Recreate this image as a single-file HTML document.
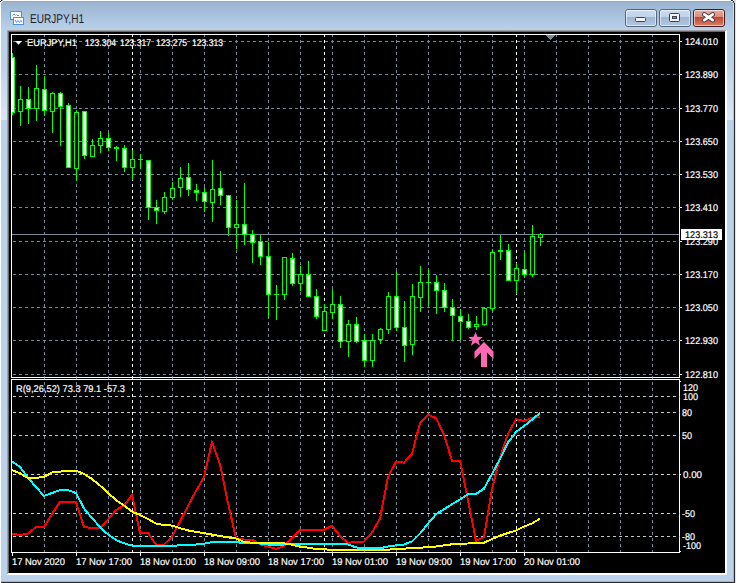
<!DOCTYPE html><html><head><meta charset="utf-8"><style>
html,body{margin:0;padding:0;background:#fff;width:737px;height:583px;overflow:hidden}
svg{display:block}
text{font-family:"Liberation Sans",sans-serif}
</style></head><body>
<svg width="737" height="583" viewBox="0 0 737 583">
<defs><linearGradient id="tg" x1="0" y1="0" x2="0" y2="1"><stop offset="0" stop-color="#99b3cf"/><stop offset="1" stop-color="#bbd2eb"/></linearGradient><linearGradient id="bt" x1="0" y1="0" x2="0" y2="1"><stop offset="0" stop-color="#cbdcef"/><stop offset="0.42" stop-color="#bfd3ea"/><stop offset="0.43" stop-color="#9db5d0"/><stop offset="1" stop-color="#b3c9e2"/></linearGradient><linearGradient id="ct" x1="0" y1="0" x2="0" y2="1"><stop offset="0" stop-color="#eab0a2"/><stop offset="0.42" stop-color="#dc8c79"/><stop offset="0.43" stop-color="#c2432a"/><stop offset="1" stop-color="#d8826b"/></linearGradient><linearGradient id="glow" x1="0" y1="0" x2="0" y2="1"><stop offset="0" stop-color="#bcd2ea"/><stop offset="1" stop-color="#dbe7f4"/></linearGradient></defs>
<g shape-rendering="crispEdges">
<rect x="1" y="1" width="734" height="582" fill="#bcd2ea"/>
<rect x="1" y="1" width="734" height="30" fill="url(#tg)"/>
<rect x="2" y="1" width="732" height="1" fill="#8eabca"/>
<rect x="1" y="64" width="6" height="56" fill="url(#glow)"/>
<rect x="727" y="64" width="6" height="56" fill="url(#glow)"/>
<linearGradient id="cy" x1="0" y1="0" x2="0" y2="1"><stop offset="0" stop-color="#b4f0ff"/><stop offset="0.15" stop-color="#6edcff"/><stop offset="1" stop-color="#4fd3ff"/></linearGradient>
<rect x="733" y="3" width="1" height="579" fill="url(#cy)"/>
<rect x="1" y="581" width="733" height="1" fill="#4fd3ff"/>
<rect x="734" y="3" width="1" height="580" fill="#2b2b2b"/>
<rect x="1" y="582" width="734" height="1" fill="#2b2b2b"/>
<rect x="735" y="0" width="2" height="583" fill="#ffffff"/>
<rect x="0" y="0" width="1" height="583" fill="#ffffff"/>
<rect x="1" y="0" width="1" height="1" fill="#1a1a1a"/><rect x="0" y="1" width="1" height="1" fill="#1a1a1a"/><rect x="1" y="1" width="2" height="1" fill="#e2e6ea"/><rect x="1" y="2" width="1" height="1" fill="#e2e6ea"/><rect x="2" y="0" width="1" height="1" fill="#909090"/>
<rect x="731" y="0" width="2" height="1" fill="#0a2a2a"/><rect x="733" y="1" width="1" height="1" fill="#103030"/><rect x="733" y="2" width="1" height="1" fill="#206060"/><rect x="731" y="1" width="2" height="1" fill="#c8f6ff"/><rect x="734" y="0" width="1" height="3" fill="#c8c8c8"/><rect x="735" y="0" width="1" height="583" fill="#e4e4e4"/>
</g>
<g shape-rendering="crispEdges"><rect x="10.5" y="11.5" width="11" height="8" fill="#fffef5" stroke="#5592f2" stroke-width="1"/><rect x="10.5" y="11.5" width="11" height="8" fill="none" stroke="#3f8a6a" stroke-width="1" stroke-dasharray="1 2" stroke-dashoffset="1" opacity="0.6"/><rect x="13.5" y="17.5" width="10" height="7" fill="#ffffff" stroke="#5592f2" stroke-width="1"/><rect x="13.5" y="17.5" width="10" height="7" fill="none" stroke="#3f8a6a" stroke-width="1" stroke-dasharray="1 2" stroke-dashoffset="1" opacity="0.6"/></g><path d="M12.5,15.5 L14,14 L15.5,15.5 M16.5,14.5 L18,16 L19,15" fill="none" stroke="#4f8bf0" stroke-width="1"/><polyline points="15,20 16.5,22.5 18,20.5 19.5,22.5 21,20.5 22,22" fill="none" stroke="#4f8bf0" stroke-width="1"/>
<text x="30" y="23" font-size="12.6" fill="#1e1e30" text-rendering="geometricPrecision" textLength="54" lengthAdjust="spacingAndGlyphs">EURJPY,H1</text>
<rect x="625.5" y="9.5" width="31" height="17" rx="2.5" ry="2.5" fill="url(#bt)" stroke="#56667c" stroke-width="1"/><rect x="626.5" y="10.5" width="29" height="15" rx="1.5" ry="1.5" fill="none" stroke="rgba(255,255,255,0.55)" stroke-width="1"/>
<rect x="659.5" y="9.5" width="31" height="17" rx="2.5" ry="2.5" fill="url(#bt)" stroke="#56667c" stroke-width="1"/><rect x="660.5" y="10.5" width="29" height="15" rx="1.5" ry="1.5" fill="none" stroke="rgba(255,255,255,0.55)" stroke-width="1"/>
<rect x="693.5" y="9.5" width="31" height="17" rx="2.5" ry="2.5" fill="url(#ct)" stroke="#4a1a22" stroke-width="1"/><rect x="694.5" y="10.5" width="29" height="15" rx="1.5" ry="1.5" fill="none" stroke="rgba(255,255,255,0.55)" stroke-width="1"/>
<rect x="635.5" y="17.5" width="10" height="4" rx="1" fill="#f4f4f4" stroke="#3c4250" stroke-width="1"/>
<rect x="669.5" y="13.5" width="10" height="8" rx="1" fill="#f4f4f4" stroke="#3c4250" stroke-width="1"/><rect x="672.5" y="16.5" width="4" height="2" fill="#7d97b8" stroke="#3c4250" stroke-width="1"/>
<path d="M704.2,14.4 L712.8,20.2 M712.8,14.4 L704.2,20.2" fill="none" stroke="#3a3f4c" stroke-width="4.4" stroke-linecap="round"/><path d="M704.2,14.4 L712.8,20.2 M712.8,14.4 L704.2,20.2" fill="none" stroke="#ffffff" stroke-width="2.6" stroke-linecap="round"/>
<g shape-rendering="crispEdges">
<rect x="7" y="30" width="720" height="545" fill="#ffffff"/>
<rect x="7" y="30" width="719" height="1" fill="#a0a0a0"/><rect x="7" y="30" width="1" height="544" fill="#a0a0a0"/>
<rect x="8" y="31" width="717" height="1" fill="#696969"/><rect x="8" y="31" width="1" height="542" fill="#696969"/>
<rect x="9" y="32" width="716" height="541" fill="#000000"/>
</g>
<g shape-rendering="crispEdges">
<path d="M13,41.5H16M19,41.5H22M25,41.5H28M31,41.5H34M37,41.5H40M43,41.5H46M49,41.5H52M55,41.5H58M61,41.5H64M67,41.5H70M73,41.5H76M79,41.5H82M85,41.5H88M91,41.5H94M97,41.5H100M103,41.5H106M109,41.5H112M115,41.5H118M121,41.5H124M127,41.5H130M133,41.5H136M139,41.5H142M145,41.5H148M151,41.5H154M157,41.5H160M163,41.5H166M169,41.5H172M175,41.5H178M181,41.5H184M187,41.5H190M193,41.5H196M199,41.5H202M205,41.5H208M211,41.5H214M217,41.5H220M223,41.5H226M229,41.5H232M235,41.5H238M241,41.5H244M247,41.5H250M253,41.5H256M259,41.5H262M265,41.5H268M271,41.5H274M277,41.5H280M283,41.5H286M289,41.5H292M295,41.5H298M301,41.5H304M307,41.5H310M313,41.5H316M319,41.5H322M325,41.5H328M331,41.5H334M337,41.5H340M343,41.5H346M349,41.5H352M355,41.5H358M361,41.5H364M367,41.5H370M373,41.5H376M379,41.5H382M385,41.5H388M391,41.5H394M397,41.5H400M403,41.5H406M409,41.5H412M415,41.5H418M421,41.5H424M427,41.5H430M433,41.5H436M439,41.5H442M445,41.5H448M451,41.5H454M457,41.5H460M463,41.5H466M469,41.5H472M475,41.5H478M481,41.5H484M487,41.5H490M493,41.5H496M499,41.5H502M505,41.5H508M511,41.5H514M517,41.5H520M523,41.5H526M529,41.5H532M535,41.5H538M541,41.5H544M547,41.5H550M553,41.5H556M559,41.5H562M565,41.5H568M571,41.5H574M577,41.5H580M583,41.5H586M589,41.5H592M595,41.5H598M601,41.5H604M607,41.5H610M613,41.5H616M619,41.5H622M625,41.5H628M631,41.5H634M637,41.5H640M643,41.5H646M649,41.5H652M655,41.5H658M661,41.5H664M667,41.5H670M673,41.5H676" stroke="#778899" stroke-width="1" fill="none"/>
<path d="M13,74.5H16M19,74.5H22M25,74.5H28M31,74.5H34M37,74.5H40M43,74.5H46M49,74.5H52M55,74.5H58M61,74.5H64M67,74.5H70M73,74.5H76M79,74.5H82M85,74.5H88M91,74.5H94M97,74.5H100M103,74.5H106M109,74.5H112M115,74.5H118M121,74.5H124M127,74.5H130M133,74.5H136M139,74.5H142M145,74.5H148M151,74.5H154M157,74.5H160M163,74.5H166M169,74.5H172M175,74.5H178M181,74.5H184M187,74.5H190M193,74.5H196M199,74.5H202M205,74.5H208M211,74.5H214M217,74.5H220M223,74.5H226M229,74.5H232M235,74.5H238M241,74.5H244M247,74.5H250M253,74.5H256M259,74.5H262M265,74.5H268M271,74.5H274M277,74.5H280M283,74.5H286M289,74.5H292M295,74.5H298M301,74.5H304M307,74.5H310M313,74.5H316M319,74.5H322M325,74.5H328M331,74.5H334M337,74.5H340M343,74.5H346M349,74.5H352M355,74.5H358M361,74.5H364M367,74.5H370M373,74.5H376M379,74.5H382M385,74.5H388M391,74.5H394M397,74.5H400M403,74.5H406M409,74.5H412M415,74.5H418M421,74.5H424M427,74.5H430M433,74.5H436M439,74.5H442M445,74.5H448M451,74.5H454M457,74.5H460M463,74.5H466M469,74.5H472M475,74.5H478M481,74.5H484M487,74.5H490M493,74.5H496M499,74.5H502M505,74.5H508M511,74.5H514M517,74.5H520M523,74.5H526M529,74.5H532M535,74.5H538M541,74.5H544M547,74.5H550M553,74.5H556M559,74.5H562M565,74.5H568M571,74.5H574M577,74.5H580M583,74.5H586M589,74.5H592M595,74.5H598M601,74.5H604M607,74.5H610M613,74.5H616M619,74.5H622M625,74.5H628M631,74.5H634M637,74.5H640M643,74.5H646M649,74.5H652M655,74.5H658M661,74.5H664M667,74.5H670M673,74.5H676" stroke="#778899" stroke-width="1" fill="none"/>
<path d="M13,108.5H16M19,108.5H22M25,108.5H28M31,108.5H34M37,108.5H40M43,108.5H46M49,108.5H52M55,108.5H58M61,108.5H64M67,108.5H70M73,108.5H76M79,108.5H82M85,108.5H88M91,108.5H94M97,108.5H100M103,108.5H106M109,108.5H112M115,108.5H118M121,108.5H124M127,108.5H130M133,108.5H136M139,108.5H142M145,108.5H148M151,108.5H154M157,108.5H160M163,108.5H166M169,108.5H172M175,108.5H178M181,108.5H184M187,108.5H190M193,108.5H196M199,108.5H202M205,108.5H208M211,108.5H214M217,108.5H220M223,108.5H226M229,108.5H232M235,108.5H238M241,108.5H244M247,108.5H250M253,108.5H256M259,108.5H262M265,108.5H268M271,108.5H274M277,108.5H280M283,108.5H286M289,108.5H292M295,108.5H298M301,108.5H304M307,108.5H310M313,108.5H316M319,108.5H322M325,108.5H328M331,108.5H334M337,108.5H340M343,108.5H346M349,108.5H352M355,108.5H358M361,108.5H364M367,108.5H370M373,108.5H376M379,108.5H382M385,108.5H388M391,108.5H394M397,108.5H400M403,108.5H406M409,108.5H412M415,108.5H418M421,108.5H424M427,108.5H430M433,108.5H436M439,108.5H442M445,108.5H448M451,108.5H454M457,108.5H460M463,108.5H466M469,108.5H472M475,108.5H478M481,108.5H484M487,108.5H490M493,108.5H496M499,108.5H502M505,108.5H508M511,108.5H514M517,108.5H520M523,108.5H526M529,108.5H532M535,108.5H538M541,108.5H544M547,108.5H550M553,108.5H556M559,108.5H562M565,108.5H568M571,108.5H574M577,108.5H580M583,108.5H586M589,108.5H592M595,108.5H598M601,108.5H604M607,108.5H610M613,108.5H616M619,108.5H622M625,108.5H628M631,108.5H634M637,108.5H640M643,108.5H646M649,108.5H652M655,108.5H658M661,108.5H664M667,108.5H670M673,108.5H676" stroke="#778899" stroke-width="1" fill="none"/>
<path d="M13,141.5H16M19,141.5H22M25,141.5H28M31,141.5H34M37,141.5H40M43,141.5H46M49,141.5H52M55,141.5H58M61,141.5H64M67,141.5H70M73,141.5H76M79,141.5H82M85,141.5H88M91,141.5H94M97,141.5H100M103,141.5H106M109,141.5H112M115,141.5H118M121,141.5H124M127,141.5H130M133,141.5H136M139,141.5H142M145,141.5H148M151,141.5H154M157,141.5H160M163,141.5H166M169,141.5H172M175,141.5H178M181,141.5H184M187,141.5H190M193,141.5H196M199,141.5H202M205,141.5H208M211,141.5H214M217,141.5H220M223,141.5H226M229,141.5H232M235,141.5H238M241,141.5H244M247,141.5H250M253,141.5H256M259,141.5H262M265,141.5H268M271,141.5H274M277,141.5H280M283,141.5H286M289,141.5H292M295,141.5H298M301,141.5H304M307,141.5H310M313,141.5H316M319,141.5H322M325,141.5H328M331,141.5H334M337,141.5H340M343,141.5H346M349,141.5H352M355,141.5H358M361,141.5H364M367,141.5H370M373,141.5H376M379,141.5H382M385,141.5H388M391,141.5H394M397,141.5H400M403,141.5H406M409,141.5H412M415,141.5H418M421,141.5H424M427,141.5H430M433,141.5H436M439,141.5H442M445,141.5H448M451,141.5H454M457,141.5H460M463,141.5H466M469,141.5H472M475,141.5H478M481,141.5H484M487,141.5H490M493,141.5H496M499,141.5H502M505,141.5H508M511,141.5H514M517,141.5H520M523,141.5H526M529,141.5H532M535,141.5H538M541,141.5H544M547,141.5H550M553,141.5H556M559,141.5H562M565,141.5H568M571,141.5H574M577,141.5H580M583,141.5H586M589,141.5H592M595,141.5H598M601,141.5H604M607,141.5H610M613,141.5H616M619,141.5H622M625,141.5H628M631,141.5H634M637,141.5H640M643,141.5H646M649,141.5H652M655,141.5H658M661,141.5H664M667,141.5H670M673,141.5H676" stroke="#778899" stroke-width="1" fill="none"/>
<path d="M13,174.5H16M19,174.5H22M25,174.5H28M31,174.5H34M37,174.5H40M43,174.5H46M49,174.5H52M55,174.5H58M61,174.5H64M67,174.5H70M73,174.5H76M79,174.5H82M85,174.5H88M91,174.5H94M97,174.5H100M103,174.5H106M109,174.5H112M115,174.5H118M121,174.5H124M127,174.5H130M133,174.5H136M139,174.5H142M145,174.5H148M151,174.5H154M157,174.5H160M163,174.5H166M169,174.5H172M175,174.5H178M181,174.5H184M187,174.5H190M193,174.5H196M199,174.5H202M205,174.5H208M211,174.5H214M217,174.5H220M223,174.5H226M229,174.5H232M235,174.5H238M241,174.5H244M247,174.5H250M253,174.5H256M259,174.5H262M265,174.5H268M271,174.5H274M277,174.5H280M283,174.5H286M289,174.5H292M295,174.5H298M301,174.5H304M307,174.5H310M313,174.5H316M319,174.5H322M325,174.5H328M331,174.5H334M337,174.5H340M343,174.5H346M349,174.5H352M355,174.5H358M361,174.5H364M367,174.5H370M373,174.5H376M379,174.5H382M385,174.5H388M391,174.5H394M397,174.5H400M403,174.5H406M409,174.5H412M415,174.5H418M421,174.5H424M427,174.5H430M433,174.5H436M439,174.5H442M445,174.5H448M451,174.5H454M457,174.5H460M463,174.5H466M469,174.5H472M475,174.5H478M481,174.5H484M487,174.5H490M493,174.5H496M499,174.5H502M505,174.5H508M511,174.5H514M517,174.5H520M523,174.5H526M529,174.5H532M535,174.5H538M541,174.5H544M547,174.5H550M553,174.5H556M559,174.5H562M565,174.5H568M571,174.5H574M577,174.5H580M583,174.5H586M589,174.5H592M595,174.5H598M601,174.5H604M607,174.5H610M613,174.5H616M619,174.5H622M625,174.5H628M631,174.5H634M637,174.5H640M643,174.5H646M649,174.5H652M655,174.5H658M661,174.5H664M667,174.5H670M673,174.5H676" stroke="#778899" stroke-width="1" fill="none"/>
<path d="M13,207.5H16M19,207.5H22M25,207.5H28M31,207.5H34M37,207.5H40M43,207.5H46M49,207.5H52M55,207.5H58M61,207.5H64M67,207.5H70M73,207.5H76M79,207.5H82M85,207.5H88M91,207.5H94M97,207.5H100M103,207.5H106M109,207.5H112M115,207.5H118M121,207.5H124M127,207.5H130M133,207.5H136M139,207.5H142M145,207.5H148M151,207.5H154M157,207.5H160M163,207.5H166M169,207.5H172M175,207.5H178M181,207.5H184M187,207.5H190M193,207.5H196M199,207.5H202M205,207.5H208M211,207.5H214M217,207.5H220M223,207.5H226M229,207.5H232M235,207.5H238M241,207.5H244M247,207.5H250M253,207.5H256M259,207.5H262M265,207.5H268M271,207.5H274M277,207.5H280M283,207.5H286M289,207.5H292M295,207.5H298M301,207.5H304M307,207.5H310M313,207.5H316M319,207.5H322M325,207.5H328M331,207.5H334M337,207.5H340M343,207.5H346M349,207.5H352M355,207.5H358M361,207.5H364M367,207.5H370M373,207.5H376M379,207.5H382M385,207.5H388M391,207.5H394M397,207.5H400M403,207.5H406M409,207.5H412M415,207.5H418M421,207.5H424M427,207.5H430M433,207.5H436M439,207.5H442M445,207.5H448M451,207.5H454M457,207.5H460M463,207.5H466M469,207.5H472M475,207.5H478M481,207.5H484M487,207.5H490M493,207.5H496M499,207.5H502M505,207.5H508M511,207.5H514M517,207.5H520M523,207.5H526M529,207.5H532M535,207.5H538M541,207.5H544M547,207.5H550M553,207.5H556M559,207.5H562M565,207.5H568M571,207.5H574M577,207.5H580M583,207.5H586M589,207.5H592M595,207.5H598M601,207.5H604M607,207.5H610M613,207.5H616M619,207.5H622M625,207.5H628M631,207.5H634M637,207.5H640M643,207.5H646M649,207.5H652M655,207.5H658M661,207.5H664M667,207.5H670M673,207.5H676" stroke="#778899" stroke-width="1" fill="none"/>
<path d="M13,241.5H16M19,241.5H22M25,241.5H28M31,241.5H34M37,241.5H40M43,241.5H46M49,241.5H52M55,241.5H58M61,241.5H64M67,241.5H70M73,241.5H76M79,241.5H82M85,241.5H88M91,241.5H94M97,241.5H100M103,241.5H106M109,241.5H112M115,241.5H118M121,241.5H124M127,241.5H130M133,241.5H136M139,241.5H142M145,241.5H148M151,241.5H154M157,241.5H160M163,241.5H166M169,241.5H172M175,241.5H178M181,241.5H184M187,241.5H190M193,241.5H196M199,241.5H202M205,241.5H208M211,241.5H214M217,241.5H220M223,241.5H226M229,241.5H232M235,241.5H238M241,241.5H244M247,241.5H250M253,241.5H256M259,241.5H262M265,241.5H268M271,241.5H274M277,241.5H280M283,241.5H286M289,241.5H292M295,241.5H298M301,241.5H304M307,241.5H310M313,241.5H316M319,241.5H322M325,241.5H328M331,241.5H334M337,241.5H340M343,241.5H346M349,241.5H352M355,241.5H358M361,241.5H364M367,241.5H370M373,241.5H376M379,241.5H382M385,241.5H388M391,241.5H394M397,241.5H400M403,241.5H406M409,241.5H412M415,241.5H418M421,241.5H424M427,241.5H430M433,241.5H436M439,241.5H442M445,241.5H448M451,241.5H454M457,241.5H460M463,241.5H466M469,241.5H472M475,241.5H478M481,241.5H484M487,241.5H490M493,241.5H496M499,241.5H502M505,241.5H508M511,241.5H514M517,241.5H520M523,241.5H526M529,241.5H532M535,241.5H538M541,241.5H544M547,241.5H550M553,241.5H556M559,241.5H562M565,241.5H568M571,241.5H574M577,241.5H580M583,241.5H586M589,241.5H592M595,241.5H598M601,241.5H604M607,241.5H610M613,241.5H616M619,241.5H622M625,241.5H628M631,241.5H634M637,241.5H640M643,241.5H646M649,241.5H652M655,241.5H658M661,241.5H664M667,241.5H670M673,241.5H676" stroke="#778899" stroke-width="1" fill="none"/>
<path d="M13,274.5H16M19,274.5H22M25,274.5H28M31,274.5H34M37,274.5H40M43,274.5H46M49,274.5H52M55,274.5H58M61,274.5H64M67,274.5H70M73,274.5H76M79,274.5H82M85,274.5H88M91,274.5H94M97,274.5H100M103,274.5H106M109,274.5H112M115,274.5H118M121,274.5H124M127,274.5H130M133,274.5H136M139,274.5H142M145,274.5H148M151,274.5H154M157,274.5H160M163,274.5H166M169,274.5H172M175,274.5H178M181,274.5H184M187,274.5H190M193,274.5H196M199,274.5H202M205,274.5H208M211,274.5H214M217,274.5H220M223,274.5H226M229,274.5H232M235,274.5H238M241,274.5H244M247,274.5H250M253,274.5H256M259,274.5H262M265,274.5H268M271,274.5H274M277,274.5H280M283,274.5H286M289,274.5H292M295,274.5H298M301,274.5H304M307,274.5H310M313,274.5H316M319,274.5H322M325,274.5H328M331,274.5H334M337,274.5H340M343,274.5H346M349,274.5H352M355,274.5H358M361,274.5H364M367,274.5H370M373,274.5H376M379,274.5H382M385,274.5H388M391,274.5H394M397,274.5H400M403,274.5H406M409,274.5H412M415,274.5H418M421,274.5H424M427,274.5H430M433,274.5H436M439,274.5H442M445,274.5H448M451,274.5H454M457,274.5H460M463,274.5H466M469,274.5H472M475,274.5H478M481,274.5H484M487,274.5H490M493,274.5H496M499,274.5H502M505,274.5H508M511,274.5H514M517,274.5H520M523,274.5H526M529,274.5H532M535,274.5H538M541,274.5H544M547,274.5H550M553,274.5H556M559,274.5H562M565,274.5H568M571,274.5H574M577,274.5H580M583,274.5H586M589,274.5H592M595,274.5H598M601,274.5H604M607,274.5H610M613,274.5H616M619,274.5H622M625,274.5H628M631,274.5H634M637,274.5H640M643,274.5H646M649,274.5H652M655,274.5H658M661,274.5H664M667,274.5H670M673,274.5H676" stroke="#778899" stroke-width="1" fill="none"/>
<path d="M13,307.5H16M19,307.5H22M25,307.5H28M31,307.5H34M37,307.5H40M43,307.5H46M49,307.5H52M55,307.5H58M61,307.5H64M67,307.5H70M73,307.5H76M79,307.5H82M85,307.5H88M91,307.5H94M97,307.5H100M103,307.5H106M109,307.5H112M115,307.5H118M121,307.5H124M127,307.5H130M133,307.5H136M139,307.5H142M145,307.5H148M151,307.5H154M157,307.5H160M163,307.5H166M169,307.5H172M175,307.5H178M181,307.5H184M187,307.5H190M193,307.5H196M199,307.5H202M205,307.5H208M211,307.5H214M217,307.5H220M223,307.5H226M229,307.5H232M235,307.5H238M241,307.5H244M247,307.5H250M253,307.5H256M259,307.5H262M265,307.5H268M271,307.5H274M277,307.5H280M283,307.5H286M289,307.5H292M295,307.5H298M301,307.5H304M307,307.5H310M313,307.5H316M319,307.5H322M325,307.5H328M331,307.5H334M337,307.5H340M343,307.5H346M349,307.5H352M355,307.5H358M361,307.5H364M367,307.5H370M373,307.5H376M379,307.5H382M385,307.5H388M391,307.5H394M397,307.5H400M403,307.5H406M409,307.5H412M415,307.5H418M421,307.5H424M427,307.5H430M433,307.5H436M439,307.5H442M445,307.5H448M451,307.5H454M457,307.5H460M463,307.5H466M469,307.5H472M475,307.5H478M481,307.5H484M487,307.5H490M493,307.5H496M499,307.5H502M505,307.5H508M511,307.5H514M517,307.5H520M523,307.5H526M529,307.5H532M535,307.5H538M541,307.5H544M547,307.5H550M553,307.5H556M559,307.5H562M565,307.5H568M571,307.5H574M577,307.5H580M583,307.5H586M589,307.5H592M595,307.5H598M601,307.5H604M607,307.5H610M613,307.5H616M619,307.5H622M625,307.5H628M631,307.5H634M637,307.5H640M643,307.5H646M649,307.5H652M655,307.5H658M661,307.5H664M667,307.5H670M673,307.5H676" stroke="#778899" stroke-width="1" fill="none"/>
<path d="M13,340.5H16M19,340.5H22M25,340.5H28M31,340.5H34M37,340.5H40M43,340.5H46M49,340.5H52M55,340.5H58M61,340.5H64M67,340.5H70M73,340.5H76M79,340.5H82M85,340.5H88M91,340.5H94M97,340.5H100M103,340.5H106M109,340.5H112M115,340.5H118M121,340.5H124M127,340.5H130M133,340.5H136M139,340.5H142M145,340.5H148M151,340.5H154M157,340.5H160M163,340.5H166M169,340.5H172M175,340.5H178M181,340.5H184M187,340.5H190M193,340.5H196M199,340.5H202M205,340.5H208M211,340.5H214M217,340.5H220M223,340.5H226M229,340.5H232M235,340.5H238M241,340.5H244M247,340.5H250M253,340.5H256M259,340.5H262M265,340.5H268M271,340.5H274M277,340.5H280M283,340.5H286M289,340.5H292M295,340.5H298M301,340.5H304M307,340.5H310M313,340.5H316M319,340.5H322M325,340.5H328M331,340.5H334M337,340.5H340M343,340.5H346M349,340.5H352M355,340.5H358M361,340.5H364M367,340.5H370M373,340.5H376M379,340.5H382M385,340.5H388M391,340.5H394M397,340.5H400M403,340.5H406M409,340.5H412M415,340.5H418M421,340.5H424M427,340.5H430M433,340.5H436M439,340.5H442M445,340.5H448M451,340.5H454M457,340.5H460M463,340.5H466M469,340.5H472M475,340.5H478M481,340.5H484M487,340.5H490M493,340.5H496M499,340.5H502M505,340.5H508M511,340.5H514M517,340.5H520M523,340.5H526M529,340.5H532M535,340.5H538M541,340.5H544M547,340.5H550M553,340.5H556M559,340.5H562M565,340.5H568M571,340.5H574M577,340.5H580M583,340.5H586M589,340.5H592M595,340.5H598M601,340.5H604M607,340.5H610M613,340.5H616M619,340.5H622M625,340.5H628M631,340.5H634M637,340.5H640M643,340.5H646M649,340.5H652M655,340.5H658M661,340.5H664M667,340.5H670M673,340.5H676" stroke="#778899" stroke-width="1" fill="none"/>
<path d="M13,374.5H16M19,374.5H22M25,374.5H28M31,374.5H34M37,374.5H40M43,374.5H46M49,374.5H52M55,374.5H58M61,374.5H64M67,374.5H70M73,374.5H76M79,374.5H82M85,374.5H88M91,374.5H94M97,374.5H100M103,374.5H106M109,374.5H112M115,374.5H118M121,374.5H124M127,374.5H130M133,374.5H136M139,374.5H142M145,374.5H148M151,374.5H154M157,374.5H160M163,374.5H166M169,374.5H172M175,374.5H178M181,374.5H184M187,374.5H190M193,374.5H196M199,374.5H202M205,374.5H208M211,374.5H214M217,374.5H220M223,374.5H226M229,374.5H232M235,374.5H238M241,374.5H244M247,374.5H250M253,374.5H256M259,374.5H262M265,374.5H268M271,374.5H274M277,374.5H280M283,374.5H286M289,374.5H292M295,374.5H298M301,374.5H304M307,374.5H310M313,374.5H316M319,374.5H322M325,374.5H328M331,374.5H334M337,374.5H340M343,374.5H346M349,374.5H352M355,374.5H358M361,374.5H364M367,374.5H370M373,374.5H376M379,374.5H382M385,374.5H388M391,374.5H394M397,374.5H400M403,374.5H406M409,374.5H412M415,374.5H418M421,374.5H424M427,374.5H430M433,374.5H436M439,374.5H442M445,374.5H448M451,374.5H454M457,374.5H460M463,374.5H466M469,374.5H472M475,374.5H478M481,374.5H484M487,374.5H490M493,374.5H496M499,374.5H502M505,374.5H508M511,374.5H514M517,374.5H520M523,374.5H526M529,374.5H532M535,374.5H538M541,374.5H544M547,374.5H550M553,374.5H556M559,374.5H562M565,374.5H568M571,374.5H574M577,374.5H580M583,374.5H586M589,374.5H592M595,374.5H598M601,374.5H604M607,374.5H610M613,374.5H616M619,374.5H622M625,374.5H628M631,374.5H634M637,374.5H640M643,374.5H646M649,374.5H652M655,374.5H658M661,374.5H664M667,374.5H670M673,374.5H676" stroke="#778899" stroke-width="1" fill="none"/>
<path d="M13,396.5H16M19,396.5H22M25,396.5H28M31,396.5H34M37,396.5H40M43,396.5H46M49,396.5H52M55,396.5H58M61,396.5H64M67,396.5H70M73,396.5H76M79,396.5H82M85,396.5H88M91,396.5H94M97,396.5H100M103,396.5H106M109,396.5H112M115,396.5H118M121,396.5H124M127,396.5H130M133,396.5H136M139,396.5H142M145,396.5H148M151,396.5H154M157,396.5H160M163,396.5H166M169,396.5H172M175,396.5H178M181,396.5H184M187,396.5H190M193,396.5H196M199,396.5H202M205,396.5H208M211,396.5H214M217,396.5H220M223,396.5H226M229,396.5H232M235,396.5H238M241,396.5H244M247,396.5H250M253,396.5H256M259,396.5H262M265,396.5H268M271,396.5H274M277,396.5H280M283,396.5H286M289,396.5H292M295,396.5H298M301,396.5H304M307,396.5H310M313,396.5H316M319,396.5H322M325,396.5H328M331,396.5H334M337,396.5H340M343,396.5H346M349,396.5H352M355,396.5H358M361,396.5H364M367,396.5H370M373,396.5H376M379,396.5H382M385,396.5H388M391,396.5H394M397,396.5H400M403,396.5H406M409,396.5H412M415,396.5H418M421,396.5H424M427,396.5H430M433,396.5H436M439,396.5H442M445,396.5H448M451,396.5H454M457,396.5H460M463,396.5H466M469,396.5H472M475,396.5H478M481,396.5H484M487,396.5H490M493,396.5H496M499,396.5H502M505,396.5H508M511,396.5H514M517,396.5H520M523,396.5H526M529,396.5H532M535,396.5H538M541,396.5H544M547,396.5H550M553,396.5H556M559,396.5H562M565,396.5H568M571,396.5H574M577,396.5H580M583,396.5H586M589,396.5H592M595,396.5H598M601,396.5H604M607,396.5H610M613,396.5H616M619,396.5H622M625,396.5H628M631,396.5H634M637,396.5H640M643,396.5H646M649,396.5H652M655,396.5H658M661,396.5H664M667,396.5H670M673,396.5H676" stroke="#c8c8c8" stroke-width="1" fill="none"/>
<path d="M13,412.5H16M19,412.5H22M25,412.5H28M31,412.5H34M37,412.5H40M43,412.5H46M49,412.5H52M55,412.5H58M61,412.5H64M67,412.5H70M73,412.5H76M79,412.5H82M85,412.5H88M91,412.5H94M97,412.5H100M103,412.5H106M109,412.5H112M115,412.5H118M121,412.5H124M127,412.5H130M133,412.5H136M139,412.5H142M145,412.5H148M151,412.5H154M157,412.5H160M163,412.5H166M169,412.5H172M175,412.5H178M181,412.5H184M187,412.5H190M193,412.5H196M199,412.5H202M205,412.5H208M211,412.5H214M217,412.5H220M223,412.5H226M229,412.5H232M235,412.5H238M241,412.5H244M247,412.5H250M253,412.5H256M259,412.5H262M265,412.5H268M271,412.5H274M277,412.5H280M283,412.5H286M289,412.5H292M295,412.5H298M301,412.5H304M307,412.5H310M313,412.5H316M319,412.5H322M325,412.5H328M331,412.5H334M337,412.5H340M343,412.5H346M349,412.5H352M355,412.5H358M361,412.5H364M367,412.5H370M373,412.5H376M379,412.5H382M385,412.5H388M391,412.5H394M397,412.5H400M403,412.5H406M409,412.5H412M415,412.5H418M421,412.5H424M427,412.5H430M433,412.5H436M439,412.5H442M445,412.5H448M451,412.5H454M457,412.5H460M463,412.5H466M469,412.5H472M475,412.5H478M481,412.5H484M487,412.5H490M493,412.5H496M499,412.5H502M505,412.5H508M511,412.5H514M517,412.5H520M523,412.5H526M529,412.5H532M535,412.5H538M541,412.5H544M547,412.5H550M553,412.5H556M559,412.5H562M565,412.5H568M571,412.5H574M577,412.5H580M583,412.5H586M589,412.5H592M595,412.5H598M601,412.5H604M607,412.5H610M613,412.5H616M619,412.5H622M625,412.5H628M631,412.5H634M637,412.5H640M643,412.5H646M649,412.5H652M655,412.5H658M661,412.5H664M667,412.5H670M673,412.5H676" stroke="#c8c8c8" stroke-width="1" fill="none"/>
<path d="M13,435.5H16M19,435.5H22M25,435.5H28M31,435.5H34M37,435.5H40M43,435.5H46M49,435.5H52M55,435.5H58M61,435.5H64M67,435.5H70M73,435.5H76M79,435.5H82M85,435.5H88M91,435.5H94M97,435.5H100M103,435.5H106M109,435.5H112M115,435.5H118M121,435.5H124M127,435.5H130M133,435.5H136M139,435.5H142M145,435.5H148M151,435.5H154M157,435.5H160M163,435.5H166M169,435.5H172M175,435.5H178M181,435.5H184M187,435.5H190M193,435.5H196M199,435.5H202M205,435.5H208M211,435.5H214M217,435.5H220M223,435.5H226M229,435.5H232M235,435.5H238M241,435.5H244M247,435.5H250M253,435.5H256M259,435.5H262M265,435.5H268M271,435.5H274M277,435.5H280M283,435.5H286M289,435.5H292M295,435.5H298M301,435.5H304M307,435.5H310M313,435.5H316M319,435.5H322M325,435.5H328M331,435.5H334M337,435.5H340M343,435.5H346M349,435.5H352M355,435.5H358M361,435.5H364M367,435.5H370M373,435.5H376M379,435.5H382M385,435.5H388M391,435.5H394M397,435.5H400M403,435.5H406M409,435.5H412M415,435.5H418M421,435.5H424M427,435.5H430M433,435.5H436M439,435.5H442M445,435.5H448M451,435.5H454M457,435.5H460M463,435.5H466M469,435.5H472M475,435.5H478M481,435.5H484M487,435.5H490M493,435.5H496M499,435.5H502M505,435.5H508M511,435.5H514M517,435.5H520M523,435.5H526M529,435.5H532M535,435.5H538M541,435.5H544M547,435.5H550M553,435.5H556M559,435.5H562M565,435.5H568M571,435.5H574M577,435.5H580M583,435.5H586M589,435.5H592M595,435.5H598M601,435.5H604M607,435.5H610M613,435.5H616M619,435.5H622M625,435.5H628M631,435.5H634M637,435.5H640M643,435.5H646M649,435.5H652M655,435.5H658M661,435.5H664M667,435.5H670M673,435.5H676" stroke="#c8c8c8" stroke-width="1" fill="none"/>
<path d="M13,474.5H16M19,474.5H22M25,474.5H28M31,474.5H34M37,474.5H40M43,474.5H46M49,474.5H52M55,474.5H58M61,474.5H64M67,474.5H70M73,474.5H76M79,474.5H82M85,474.5H88M91,474.5H94M97,474.5H100M103,474.5H106M109,474.5H112M115,474.5H118M121,474.5H124M127,474.5H130M133,474.5H136M139,474.5H142M145,474.5H148M151,474.5H154M157,474.5H160M163,474.5H166M169,474.5H172M175,474.5H178M181,474.5H184M187,474.5H190M193,474.5H196M199,474.5H202M205,474.5H208M211,474.5H214M217,474.5H220M223,474.5H226M229,474.5H232M235,474.5H238M241,474.5H244M247,474.5H250M253,474.5H256M259,474.5H262M265,474.5H268M271,474.5H274M277,474.5H280M283,474.5H286M289,474.5H292M295,474.5H298M301,474.5H304M307,474.5H310M313,474.5H316M319,474.5H322M325,474.5H328M331,474.5H334M337,474.5H340M343,474.5H346M349,474.5H352M355,474.5H358M361,474.5H364M367,474.5H370M373,474.5H376M379,474.5H382M385,474.5H388M391,474.5H394M397,474.5H400M403,474.5H406M409,474.5H412M415,474.5H418M421,474.5H424M427,474.5H430M433,474.5H436M439,474.5H442M445,474.5H448M451,474.5H454M457,474.5H460M463,474.5H466M469,474.5H472M475,474.5H478M481,474.5H484M487,474.5H490M493,474.5H496M499,474.5H502M505,474.5H508M511,474.5H514M517,474.5H520M523,474.5H526M529,474.5H532M535,474.5H538M541,474.5H544M547,474.5H550M553,474.5H556M559,474.5H562M565,474.5H568M571,474.5H574M577,474.5H580M583,474.5H586M589,474.5H592M595,474.5H598M601,474.5H604M607,474.5H610M613,474.5H616M619,474.5H622M625,474.5H628M631,474.5H634M637,474.5H640M643,474.5H646M649,474.5H652M655,474.5H658M661,474.5H664M667,474.5H670M673,474.5H676" stroke="#c8c8c8" stroke-width="1" fill="none"/>
<path d="M13,513.5H16M19,513.5H22M25,513.5H28M31,513.5H34M37,513.5H40M43,513.5H46M49,513.5H52M55,513.5H58M61,513.5H64M67,513.5H70M73,513.5H76M79,513.5H82M85,513.5H88M91,513.5H94M97,513.5H100M103,513.5H106M109,513.5H112M115,513.5H118M121,513.5H124M127,513.5H130M133,513.5H136M139,513.5H142M145,513.5H148M151,513.5H154M157,513.5H160M163,513.5H166M169,513.5H172M175,513.5H178M181,513.5H184M187,513.5H190M193,513.5H196M199,513.5H202M205,513.5H208M211,513.5H214M217,513.5H220M223,513.5H226M229,513.5H232M235,513.5H238M241,513.5H244M247,513.5H250M253,513.5H256M259,513.5H262M265,513.5H268M271,513.5H274M277,513.5H280M283,513.5H286M289,513.5H292M295,513.5H298M301,513.5H304M307,513.5H310M313,513.5H316M319,513.5H322M325,513.5H328M331,513.5H334M337,513.5H340M343,513.5H346M349,513.5H352M355,513.5H358M361,513.5H364M367,513.5H370M373,513.5H376M379,513.5H382M385,513.5H388M391,513.5H394M397,513.5H400M403,513.5H406M409,513.5H412M415,513.5H418M421,513.5H424M427,513.5H430M433,513.5H436M439,513.5H442M445,513.5H448M451,513.5H454M457,513.5H460M463,513.5H466M469,513.5H472M475,513.5H478M481,513.5H484M487,513.5H490M493,513.5H496M499,513.5H502M505,513.5H508M511,513.5H514M517,513.5H520M523,513.5H526M529,513.5H532M535,513.5H538M541,513.5H544M547,513.5H550M553,513.5H556M559,513.5H562M565,513.5H568M571,513.5H574M577,513.5H580M583,513.5H586M589,513.5H592M595,513.5H598M601,513.5H604M607,513.5H610M613,513.5H616M619,513.5H622M625,513.5H628M631,513.5H634M637,513.5H640M643,513.5H646M649,513.5H652M655,513.5H658M661,513.5H664M667,513.5H670M673,513.5H676" stroke="#c8c8c8" stroke-width="1" fill="none"/>
<path d="M13,536.5H16M19,536.5H22M25,536.5H28M31,536.5H34M37,536.5H40M43,536.5H46M49,536.5H52M55,536.5H58M61,536.5H64M67,536.5H70M73,536.5H76M79,536.5H82M85,536.5H88M91,536.5H94M97,536.5H100M103,536.5H106M109,536.5H112M115,536.5H118M121,536.5H124M127,536.5H130M133,536.5H136M139,536.5H142M145,536.5H148M151,536.5H154M157,536.5H160M163,536.5H166M169,536.5H172M175,536.5H178M181,536.5H184M187,536.5H190M193,536.5H196M199,536.5H202M205,536.5H208M211,536.5H214M217,536.5H220M223,536.5H226M229,536.5H232M235,536.5H238M241,536.5H244M247,536.5H250M253,536.5H256M259,536.5H262M265,536.5H268M271,536.5H274M277,536.5H280M283,536.5H286M289,536.5H292M295,536.5H298M301,536.5H304M307,536.5H310M313,536.5H316M319,536.5H322M325,536.5H328M331,536.5H334M337,536.5H340M343,536.5H346M349,536.5H352M355,536.5H358M361,536.5H364M367,536.5H370M373,536.5H376M379,536.5H382M385,536.5H388M391,536.5H394M397,536.5H400M403,536.5H406M409,536.5H412M415,536.5H418M421,536.5H424M427,536.5H430M433,536.5H436M439,536.5H442M445,536.5H448M451,536.5H454M457,536.5H460M463,536.5H466M469,536.5H472M475,536.5H478M481,536.5H484M487,536.5H490M493,536.5H496M499,536.5H502M505,536.5H508M511,536.5H514M517,536.5H520M523,536.5H526M529,536.5H532M535,536.5H538M541,536.5H544M547,536.5H550M553,536.5H556M559,536.5H562M565,536.5H568M571,536.5H574M577,536.5H580M583,536.5H586M589,536.5H592M595,536.5H598M601,536.5H604M607,536.5H610M613,536.5H616M619,536.5H622M625,536.5H628M631,536.5H634M637,536.5H640M643,536.5H646M649,536.5H652M655,536.5H658M661,536.5H664M667,536.5H670M673,536.5H676" stroke="#c8c8c8" stroke-width="1" fill="none"/>
<path d="M44.5,35V37M44.5,40V43M44.5,46V49M44.5,52V55M44.5,58V61M44.5,64V67M44.5,70V73M44.5,76V79M44.5,82V85M44.5,88V91M44.5,94V97M44.5,100V103M44.5,106V109M44.5,112V115M44.5,118V121M44.5,124V127M44.5,130V133M44.5,136V139M44.5,142V145M44.5,148V151M44.5,154V157M44.5,160V163M44.5,166V169M44.5,172V175M44.5,178V181M44.5,184V187M44.5,190V193M44.5,196V199M44.5,202V205M44.5,208V211M44.5,214V217M44.5,220V223M44.5,226V229M44.5,232V235M44.5,238V241M44.5,244V247M44.5,250V253M44.5,256V259M44.5,262V265M44.5,268V271M44.5,274V277M44.5,280V283M44.5,286V289M44.5,292V295M44.5,298V301M44.5,304V307M44.5,310V313M44.5,316V319M44.5,322V325M44.5,328V331M44.5,334V337M44.5,340V343M44.5,346V349M44.5,352V355M44.5,358V361M44.5,364V367M44.5,370V373M44.5,376V377" stroke="#778899" stroke-width="1" fill="none"/>
<path d="M44.5,382V385M44.5,388V391M44.5,394V397M44.5,400V403M44.5,406V409M44.5,412V415M44.5,418V421M44.5,424V427M44.5,430V433M44.5,436V439M44.5,442V445M44.5,448V451M44.5,454V457M44.5,460V463M44.5,466V469M44.5,472V475M44.5,478V481M44.5,484V487M44.5,490V493M44.5,496V499M44.5,502V505M44.5,508V511M44.5,514V517M44.5,520V523M44.5,526V529M44.5,532V535M44.5,538V541M44.5,544V547M44.5,550V552" stroke="#778899" stroke-width="1" fill="none"/>
<path d="M76.5,35V37M76.5,40V43M76.5,46V49M76.5,52V55M76.5,58V61M76.5,64V67M76.5,70V73M76.5,76V79M76.5,82V85M76.5,88V91M76.5,94V97M76.5,100V103M76.5,106V109M76.5,112V115M76.5,118V121M76.5,124V127M76.5,130V133M76.5,136V139M76.5,142V145M76.5,148V151M76.5,154V157M76.5,160V163M76.5,166V169M76.5,172V175M76.5,178V181M76.5,184V187M76.5,190V193M76.5,196V199M76.5,202V205M76.5,208V211M76.5,214V217M76.5,220V223M76.5,226V229M76.5,232V235M76.5,238V241M76.5,244V247M76.5,250V253M76.5,256V259M76.5,262V265M76.5,268V271M76.5,274V277M76.5,280V283M76.5,286V289M76.5,292V295M76.5,298V301M76.5,304V307M76.5,310V313M76.5,316V319M76.5,322V325M76.5,328V331M76.5,334V337M76.5,340V343M76.5,346V349M76.5,352V355M76.5,358V361M76.5,364V367M76.5,370V373M76.5,376V377" stroke="#778899" stroke-width="1" fill="none"/>
<path d="M76.5,382V385M76.5,388V391M76.5,394V397M76.5,400V403M76.5,406V409M76.5,412V415M76.5,418V421M76.5,424V427M76.5,430V433M76.5,436V439M76.5,442V445M76.5,448V451M76.5,454V457M76.5,460V463M76.5,466V469M76.5,472V475M76.5,478V481M76.5,484V487M76.5,490V493M76.5,496V499M76.5,502V505M76.5,508V511M76.5,514V517M76.5,520V523M76.5,526V529M76.5,532V535M76.5,538V541M76.5,544V547M76.5,550V552" stroke="#778899" stroke-width="1" fill="none"/>
<path d="M108.5,35V37M108.5,40V43M108.5,46V49M108.5,52V55M108.5,58V61M108.5,64V67M108.5,70V73M108.5,76V79M108.5,82V85M108.5,88V91M108.5,94V97M108.5,100V103M108.5,106V109M108.5,112V115M108.5,118V121M108.5,124V127M108.5,130V133M108.5,136V139M108.5,142V145M108.5,148V151M108.5,154V157M108.5,160V163M108.5,166V169M108.5,172V175M108.5,178V181M108.5,184V187M108.5,190V193M108.5,196V199M108.5,202V205M108.5,208V211M108.5,214V217M108.5,220V223M108.5,226V229M108.5,232V235M108.5,238V241M108.5,244V247M108.5,250V253M108.5,256V259M108.5,262V265M108.5,268V271M108.5,274V277M108.5,280V283M108.5,286V289M108.5,292V295M108.5,298V301M108.5,304V307M108.5,310V313M108.5,316V319M108.5,322V325M108.5,328V331M108.5,334V337M108.5,340V343M108.5,346V349M108.5,352V355M108.5,358V361M108.5,364V367M108.5,370V373M108.5,376V377" stroke="#778899" stroke-width="1" fill="none"/>
<path d="M108.5,382V385M108.5,388V391M108.5,394V397M108.5,400V403M108.5,406V409M108.5,412V415M108.5,418V421M108.5,424V427M108.5,430V433M108.5,436V439M108.5,442V445M108.5,448V451M108.5,454V457M108.5,460V463M108.5,466V469M108.5,472V475M108.5,478V481M108.5,484V487M108.5,490V493M108.5,496V499M108.5,502V505M108.5,508V511M108.5,514V517M108.5,520V523M108.5,526V529M108.5,532V535M108.5,538V541M108.5,544V547M108.5,550V552" stroke="#778899" stroke-width="1" fill="none"/>
<path d="M140.5,35V37M140.5,40V43M140.5,46V49M140.5,52V55M140.5,58V61M140.5,64V67M140.5,70V73M140.5,76V79M140.5,82V85M140.5,88V91M140.5,94V97M140.5,100V103M140.5,106V109M140.5,112V115M140.5,118V121M140.5,124V127M140.5,130V133M140.5,136V139M140.5,142V145M140.5,148V151M140.5,154V157M140.5,160V163M140.5,166V169M140.5,172V175M140.5,178V181M140.5,184V187M140.5,190V193M140.5,196V199M140.5,202V205M140.5,208V211M140.5,214V217M140.5,220V223M140.5,226V229M140.5,232V235M140.5,238V241M140.5,244V247M140.5,250V253M140.5,256V259M140.5,262V265M140.5,268V271M140.5,274V277M140.5,280V283M140.5,286V289M140.5,292V295M140.5,298V301M140.5,304V307M140.5,310V313M140.5,316V319M140.5,322V325M140.5,328V331M140.5,334V337M140.5,340V343M140.5,346V349M140.5,352V355M140.5,358V361M140.5,364V367M140.5,370V373M140.5,376V377" stroke="#778899" stroke-width="1" fill="none"/>
<path d="M140.5,382V385M140.5,388V391M140.5,394V397M140.5,400V403M140.5,406V409M140.5,412V415M140.5,418V421M140.5,424V427M140.5,430V433M140.5,436V439M140.5,442V445M140.5,448V451M140.5,454V457M140.5,460V463M140.5,466V469M140.5,472V475M140.5,478V481M140.5,484V487M140.5,490V493M140.5,496V499M140.5,502V505M140.5,508V511M140.5,514V517M140.5,520V523M140.5,526V529M140.5,532V535M140.5,538V541M140.5,544V547M140.5,550V552" stroke="#778899" stroke-width="1" fill="none"/>
<path d="M172.5,35V37M172.5,40V43M172.5,46V49M172.5,52V55M172.5,58V61M172.5,64V67M172.5,70V73M172.5,76V79M172.5,82V85M172.5,88V91M172.5,94V97M172.5,100V103M172.5,106V109M172.5,112V115M172.5,118V121M172.5,124V127M172.5,130V133M172.5,136V139M172.5,142V145M172.5,148V151M172.5,154V157M172.5,160V163M172.5,166V169M172.5,172V175M172.5,178V181M172.5,184V187M172.5,190V193M172.5,196V199M172.5,202V205M172.5,208V211M172.5,214V217M172.5,220V223M172.5,226V229M172.5,232V235M172.5,238V241M172.5,244V247M172.5,250V253M172.5,256V259M172.5,262V265M172.5,268V271M172.5,274V277M172.5,280V283M172.5,286V289M172.5,292V295M172.5,298V301M172.5,304V307M172.5,310V313M172.5,316V319M172.5,322V325M172.5,328V331M172.5,334V337M172.5,340V343M172.5,346V349M172.5,352V355M172.5,358V361M172.5,364V367M172.5,370V373M172.5,376V377" stroke="#778899" stroke-width="1" fill="none"/>
<path d="M172.5,382V385M172.5,388V391M172.5,394V397M172.5,400V403M172.5,406V409M172.5,412V415M172.5,418V421M172.5,424V427M172.5,430V433M172.5,436V439M172.5,442V445M172.5,448V451M172.5,454V457M172.5,460V463M172.5,466V469M172.5,472V475M172.5,478V481M172.5,484V487M172.5,490V493M172.5,496V499M172.5,502V505M172.5,508V511M172.5,514V517M172.5,520V523M172.5,526V529M172.5,532V535M172.5,538V541M172.5,544V547M172.5,550V552" stroke="#778899" stroke-width="1" fill="none"/>
<path d="M204.5,35V37M204.5,40V43M204.5,46V49M204.5,52V55M204.5,58V61M204.5,64V67M204.5,70V73M204.5,76V79M204.5,82V85M204.5,88V91M204.5,94V97M204.5,100V103M204.5,106V109M204.5,112V115M204.5,118V121M204.5,124V127M204.5,130V133M204.5,136V139M204.5,142V145M204.5,148V151M204.5,154V157M204.5,160V163M204.5,166V169M204.5,172V175M204.5,178V181M204.5,184V187M204.5,190V193M204.5,196V199M204.5,202V205M204.5,208V211M204.5,214V217M204.5,220V223M204.5,226V229M204.5,232V235M204.5,238V241M204.5,244V247M204.5,250V253M204.5,256V259M204.5,262V265M204.5,268V271M204.5,274V277M204.5,280V283M204.5,286V289M204.5,292V295M204.5,298V301M204.5,304V307M204.5,310V313M204.5,316V319M204.5,322V325M204.5,328V331M204.5,334V337M204.5,340V343M204.5,346V349M204.5,352V355M204.5,358V361M204.5,364V367M204.5,370V373M204.5,376V377" stroke="#778899" stroke-width="1" fill="none"/>
<path d="M204.5,382V385M204.5,388V391M204.5,394V397M204.5,400V403M204.5,406V409M204.5,412V415M204.5,418V421M204.5,424V427M204.5,430V433M204.5,436V439M204.5,442V445M204.5,448V451M204.5,454V457M204.5,460V463M204.5,466V469M204.5,472V475M204.5,478V481M204.5,484V487M204.5,490V493M204.5,496V499M204.5,502V505M204.5,508V511M204.5,514V517M204.5,520V523M204.5,526V529M204.5,532V535M204.5,538V541M204.5,544V547M204.5,550V552" stroke="#778899" stroke-width="1" fill="none"/>
<path d="M236.5,35V37M236.5,40V43M236.5,46V49M236.5,52V55M236.5,58V61M236.5,64V67M236.5,70V73M236.5,76V79M236.5,82V85M236.5,88V91M236.5,94V97M236.5,100V103M236.5,106V109M236.5,112V115M236.5,118V121M236.5,124V127M236.5,130V133M236.5,136V139M236.5,142V145M236.5,148V151M236.5,154V157M236.5,160V163M236.5,166V169M236.5,172V175M236.5,178V181M236.5,184V187M236.5,190V193M236.5,196V199M236.5,202V205M236.5,208V211M236.5,214V217M236.5,220V223M236.5,226V229M236.5,232V235M236.5,238V241M236.5,244V247M236.5,250V253M236.5,256V259M236.5,262V265M236.5,268V271M236.5,274V277M236.5,280V283M236.5,286V289M236.5,292V295M236.5,298V301M236.5,304V307M236.5,310V313M236.5,316V319M236.5,322V325M236.5,328V331M236.5,334V337M236.5,340V343M236.5,346V349M236.5,352V355M236.5,358V361M236.5,364V367M236.5,370V373M236.5,376V377" stroke="#778899" stroke-width="1" fill="none"/>
<path d="M236.5,382V385M236.5,388V391M236.5,394V397M236.5,400V403M236.5,406V409M236.5,412V415M236.5,418V421M236.5,424V427M236.5,430V433M236.5,436V439M236.5,442V445M236.5,448V451M236.5,454V457M236.5,460V463M236.5,466V469M236.5,472V475M236.5,478V481M236.5,484V487M236.5,490V493M236.5,496V499M236.5,502V505M236.5,508V511M236.5,514V517M236.5,520V523M236.5,526V529M236.5,532V535M236.5,538V541M236.5,544V547M236.5,550V552" stroke="#778899" stroke-width="1" fill="none"/>
<path d="M268.5,35V37M268.5,40V43M268.5,46V49M268.5,52V55M268.5,58V61M268.5,64V67M268.5,70V73M268.5,76V79M268.5,82V85M268.5,88V91M268.5,94V97M268.5,100V103M268.5,106V109M268.5,112V115M268.5,118V121M268.5,124V127M268.5,130V133M268.5,136V139M268.5,142V145M268.5,148V151M268.5,154V157M268.5,160V163M268.5,166V169M268.5,172V175M268.5,178V181M268.5,184V187M268.5,190V193M268.5,196V199M268.5,202V205M268.5,208V211M268.5,214V217M268.5,220V223M268.5,226V229M268.5,232V235M268.5,238V241M268.5,244V247M268.5,250V253M268.5,256V259M268.5,262V265M268.5,268V271M268.5,274V277M268.5,280V283M268.5,286V289M268.5,292V295M268.5,298V301M268.5,304V307M268.5,310V313M268.5,316V319M268.5,322V325M268.5,328V331M268.5,334V337M268.5,340V343M268.5,346V349M268.5,352V355M268.5,358V361M268.5,364V367M268.5,370V373M268.5,376V377" stroke="#778899" stroke-width="1" fill="none"/>
<path d="M268.5,382V385M268.5,388V391M268.5,394V397M268.5,400V403M268.5,406V409M268.5,412V415M268.5,418V421M268.5,424V427M268.5,430V433M268.5,436V439M268.5,442V445M268.5,448V451M268.5,454V457M268.5,460V463M268.5,466V469M268.5,472V475M268.5,478V481M268.5,484V487M268.5,490V493M268.5,496V499M268.5,502V505M268.5,508V511M268.5,514V517M268.5,520V523M268.5,526V529M268.5,532V535M268.5,538V541M268.5,544V547M268.5,550V552" stroke="#778899" stroke-width="1" fill="none"/>
<path d="M300.5,35V37M300.5,40V43M300.5,46V49M300.5,52V55M300.5,58V61M300.5,64V67M300.5,70V73M300.5,76V79M300.5,82V85M300.5,88V91M300.5,94V97M300.5,100V103M300.5,106V109M300.5,112V115M300.5,118V121M300.5,124V127M300.5,130V133M300.5,136V139M300.5,142V145M300.5,148V151M300.5,154V157M300.5,160V163M300.5,166V169M300.5,172V175M300.5,178V181M300.5,184V187M300.5,190V193M300.5,196V199M300.5,202V205M300.5,208V211M300.5,214V217M300.5,220V223M300.5,226V229M300.5,232V235M300.5,238V241M300.5,244V247M300.5,250V253M300.5,256V259M300.5,262V265M300.5,268V271M300.5,274V277M300.5,280V283M300.5,286V289M300.5,292V295M300.5,298V301M300.5,304V307M300.5,310V313M300.5,316V319M300.5,322V325M300.5,328V331M300.5,334V337M300.5,340V343M300.5,346V349M300.5,352V355M300.5,358V361M300.5,364V367M300.5,370V373M300.5,376V377" stroke="#778899" stroke-width="1" fill="none"/>
<path d="M300.5,382V385M300.5,388V391M300.5,394V397M300.5,400V403M300.5,406V409M300.5,412V415M300.5,418V421M300.5,424V427M300.5,430V433M300.5,436V439M300.5,442V445M300.5,448V451M300.5,454V457M300.5,460V463M300.5,466V469M300.5,472V475M300.5,478V481M300.5,484V487M300.5,490V493M300.5,496V499M300.5,502V505M300.5,508V511M300.5,514V517M300.5,520V523M300.5,526V529M300.5,532V535M300.5,538V541M300.5,544V547M300.5,550V552" stroke="#778899" stroke-width="1" fill="none"/>
<path d="M332.5,35V37M332.5,40V43M332.5,46V49M332.5,52V55M332.5,58V61M332.5,64V67M332.5,70V73M332.5,76V79M332.5,82V85M332.5,88V91M332.5,94V97M332.5,100V103M332.5,106V109M332.5,112V115M332.5,118V121M332.5,124V127M332.5,130V133M332.5,136V139M332.5,142V145M332.5,148V151M332.5,154V157M332.5,160V163M332.5,166V169M332.5,172V175M332.5,178V181M332.5,184V187M332.5,190V193M332.5,196V199M332.5,202V205M332.5,208V211M332.5,214V217M332.5,220V223M332.5,226V229M332.5,232V235M332.5,238V241M332.5,244V247M332.5,250V253M332.5,256V259M332.5,262V265M332.5,268V271M332.5,274V277M332.5,280V283M332.5,286V289M332.5,292V295M332.5,298V301M332.5,304V307M332.5,310V313M332.5,316V319M332.5,322V325M332.5,328V331M332.5,334V337M332.5,340V343M332.5,346V349M332.5,352V355M332.5,358V361M332.5,364V367M332.5,370V373M332.5,376V377" stroke="#778899" stroke-width="1" fill="none"/>
<path d="M332.5,382V385M332.5,388V391M332.5,394V397M332.5,400V403M332.5,406V409M332.5,412V415M332.5,418V421M332.5,424V427M332.5,430V433M332.5,436V439M332.5,442V445M332.5,448V451M332.5,454V457M332.5,460V463M332.5,466V469M332.5,472V475M332.5,478V481M332.5,484V487M332.5,490V493M332.5,496V499M332.5,502V505M332.5,508V511M332.5,514V517M332.5,520V523M332.5,526V529M332.5,532V535M332.5,538V541M332.5,544V547M332.5,550V552" stroke="#778899" stroke-width="1" fill="none"/>
<path d="M364.5,35V37M364.5,40V43M364.5,46V49M364.5,52V55M364.5,58V61M364.5,64V67M364.5,70V73M364.5,76V79M364.5,82V85M364.5,88V91M364.5,94V97M364.5,100V103M364.5,106V109M364.5,112V115M364.5,118V121M364.5,124V127M364.5,130V133M364.5,136V139M364.5,142V145M364.5,148V151M364.5,154V157M364.5,160V163M364.5,166V169M364.5,172V175M364.5,178V181M364.5,184V187M364.5,190V193M364.5,196V199M364.5,202V205M364.5,208V211M364.5,214V217M364.5,220V223M364.5,226V229M364.5,232V235M364.5,238V241M364.5,244V247M364.5,250V253M364.5,256V259M364.5,262V265M364.5,268V271M364.5,274V277M364.5,280V283M364.5,286V289M364.5,292V295M364.5,298V301M364.5,304V307M364.5,310V313M364.5,316V319M364.5,322V325M364.5,328V331M364.5,334V337M364.5,340V343M364.5,346V349M364.5,352V355M364.5,358V361M364.5,364V367M364.5,370V373M364.5,376V377" stroke="#778899" stroke-width="1" fill="none"/>
<path d="M364.5,382V385M364.5,388V391M364.5,394V397M364.5,400V403M364.5,406V409M364.5,412V415M364.5,418V421M364.5,424V427M364.5,430V433M364.5,436V439M364.5,442V445M364.5,448V451M364.5,454V457M364.5,460V463M364.5,466V469M364.5,472V475M364.5,478V481M364.5,484V487M364.5,490V493M364.5,496V499M364.5,502V505M364.5,508V511M364.5,514V517M364.5,520V523M364.5,526V529M364.5,532V535M364.5,538V541M364.5,544V547M364.5,550V552" stroke="#778899" stroke-width="1" fill="none"/>
<path d="M396.5,35V37M396.5,40V43M396.5,46V49M396.5,52V55M396.5,58V61M396.5,64V67M396.5,70V73M396.5,76V79M396.5,82V85M396.5,88V91M396.5,94V97M396.5,100V103M396.5,106V109M396.5,112V115M396.5,118V121M396.5,124V127M396.5,130V133M396.5,136V139M396.5,142V145M396.5,148V151M396.5,154V157M396.5,160V163M396.5,166V169M396.5,172V175M396.5,178V181M396.5,184V187M396.5,190V193M396.5,196V199M396.5,202V205M396.5,208V211M396.5,214V217M396.5,220V223M396.5,226V229M396.5,232V235M396.5,238V241M396.5,244V247M396.5,250V253M396.5,256V259M396.5,262V265M396.5,268V271M396.5,274V277M396.5,280V283M396.5,286V289M396.5,292V295M396.5,298V301M396.5,304V307M396.5,310V313M396.5,316V319M396.5,322V325M396.5,328V331M396.5,334V337M396.5,340V343M396.5,346V349M396.5,352V355M396.5,358V361M396.5,364V367M396.5,370V373M396.5,376V377" stroke="#778899" stroke-width="1" fill="none"/>
<path d="M396.5,382V385M396.5,388V391M396.5,394V397M396.5,400V403M396.5,406V409M396.5,412V415M396.5,418V421M396.5,424V427M396.5,430V433M396.5,436V439M396.5,442V445M396.5,448V451M396.5,454V457M396.5,460V463M396.5,466V469M396.5,472V475M396.5,478V481M396.5,484V487M396.5,490V493M396.5,496V499M396.5,502V505M396.5,508V511M396.5,514V517M396.5,520V523M396.5,526V529M396.5,532V535M396.5,538V541M396.5,544V547M396.5,550V552" stroke="#778899" stroke-width="1" fill="none"/>
<path d="M428.5,35V37M428.5,40V43M428.5,46V49M428.5,52V55M428.5,58V61M428.5,64V67M428.5,70V73M428.5,76V79M428.5,82V85M428.5,88V91M428.5,94V97M428.5,100V103M428.5,106V109M428.5,112V115M428.5,118V121M428.5,124V127M428.5,130V133M428.5,136V139M428.5,142V145M428.5,148V151M428.5,154V157M428.5,160V163M428.5,166V169M428.5,172V175M428.5,178V181M428.5,184V187M428.5,190V193M428.5,196V199M428.5,202V205M428.5,208V211M428.5,214V217M428.5,220V223M428.5,226V229M428.5,232V235M428.5,238V241M428.5,244V247M428.5,250V253M428.5,256V259M428.5,262V265M428.5,268V271M428.5,274V277M428.5,280V283M428.5,286V289M428.5,292V295M428.5,298V301M428.5,304V307M428.5,310V313M428.5,316V319M428.5,322V325M428.5,328V331M428.5,334V337M428.5,340V343M428.5,346V349M428.5,352V355M428.5,358V361M428.5,364V367M428.5,370V373M428.5,376V377" stroke="#778899" stroke-width="1" fill="none"/>
<path d="M428.5,382V385M428.5,388V391M428.5,394V397M428.5,400V403M428.5,406V409M428.5,412V415M428.5,418V421M428.5,424V427M428.5,430V433M428.5,436V439M428.5,442V445M428.5,448V451M428.5,454V457M428.5,460V463M428.5,466V469M428.5,472V475M428.5,478V481M428.5,484V487M428.5,490V493M428.5,496V499M428.5,502V505M428.5,508V511M428.5,514V517M428.5,520V523M428.5,526V529M428.5,532V535M428.5,538V541M428.5,544V547M428.5,550V552" stroke="#778899" stroke-width="1" fill="none"/>
<path d="M460.5,35V37M460.5,40V43M460.5,46V49M460.5,52V55M460.5,58V61M460.5,64V67M460.5,70V73M460.5,76V79M460.5,82V85M460.5,88V91M460.5,94V97M460.5,100V103M460.5,106V109M460.5,112V115M460.5,118V121M460.5,124V127M460.5,130V133M460.5,136V139M460.5,142V145M460.5,148V151M460.5,154V157M460.5,160V163M460.5,166V169M460.5,172V175M460.5,178V181M460.5,184V187M460.5,190V193M460.5,196V199M460.5,202V205M460.5,208V211M460.5,214V217M460.5,220V223M460.5,226V229M460.5,232V235M460.5,238V241M460.5,244V247M460.5,250V253M460.5,256V259M460.5,262V265M460.5,268V271M460.5,274V277M460.5,280V283M460.5,286V289M460.5,292V295M460.5,298V301M460.5,304V307M460.5,310V313M460.5,316V319M460.5,322V325M460.5,328V331M460.5,334V337M460.5,340V343M460.5,346V349M460.5,352V355M460.5,358V361M460.5,364V367M460.5,370V373M460.5,376V377" stroke="#778899" stroke-width="1" fill="none"/>
<path d="M460.5,382V385M460.5,388V391M460.5,394V397M460.5,400V403M460.5,406V409M460.5,412V415M460.5,418V421M460.5,424V427M460.5,430V433M460.5,436V439M460.5,442V445M460.5,448V451M460.5,454V457M460.5,460V463M460.5,466V469M460.5,472V475M460.5,478V481M460.5,484V487M460.5,490V493M460.5,496V499M460.5,502V505M460.5,508V511M460.5,514V517M460.5,520V523M460.5,526V529M460.5,532V535M460.5,538V541M460.5,544V547M460.5,550V552" stroke="#778899" stroke-width="1" fill="none"/>
<path d="M492.5,35V37M492.5,40V43M492.5,46V49M492.5,52V55M492.5,58V61M492.5,64V67M492.5,70V73M492.5,76V79M492.5,82V85M492.5,88V91M492.5,94V97M492.5,100V103M492.5,106V109M492.5,112V115M492.5,118V121M492.5,124V127M492.5,130V133M492.5,136V139M492.5,142V145M492.5,148V151M492.5,154V157M492.5,160V163M492.5,166V169M492.5,172V175M492.5,178V181M492.5,184V187M492.5,190V193M492.5,196V199M492.5,202V205M492.5,208V211M492.5,214V217M492.5,220V223M492.5,226V229M492.5,232V235M492.5,238V241M492.5,244V247M492.5,250V253M492.5,256V259M492.5,262V265M492.5,268V271M492.5,274V277M492.5,280V283M492.5,286V289M492.5,292V295M492.5,298V301M492.5,304V307M492.5,310V313M492.5,316V319M492.5,322V325M492.5,328V331M492.5,334V337M492.5,340V343M492.5,346V349M492.5,352V355M492.5,358V361M492.5,364V367M492.5,370V373M492.5,376V377" stroke="#778899" stroke-width="1" fill="none"/>
<path d="M492.5,382V385M492.5,388V391M492.5,394V397M492.5,400V403M492.5,406V409M492.5,412V415M492.5,418V421M492.5,424V427M492.5,430V433M492.5,436V439M492.5,442V445M492.5,448V451M492.5,454V457M492.5,460V463M492.5,466V469M492.5,472V475M492.5,478V481M492.5,484V487M492.5,490V493M492.5,496V499M492.5,502V505M492.5,508V511M492.5,514V517M492.5,520V523M492.5,526V529M492.5,532V535M492.5,538V541M492.5,544V547M492.5,550V552" stroke="#778899" stroke-width="1" fill="none"/>
<path d="M524.5,35V37M524.5,40V43M524.5,46V49M524.5,52V55M524.5,58V61M524.5,64V67M524.5,70V73M524.5,76V79M524.5,82V85M524.5,88V91M524.5,94V97M524.5,100V103M524.5,106V109M524.5,112V115M524.5,118V121M524.5,124V127M524.5,130V133M524.5,136V139M524.5,142V145M524.5,148V151M524.5,154V157M524.5,160V163M524.5,166V169M524.5,172V175M524.5,178V181M524.5,184V187M524.5,190V193M524.5,196V199M524.5,202V205M524.5,208V211M524.5,214V217M524.5,220V223M524.5,226V229M524.5,232V235M524.5,238V241M524.5,244V247M524.5,250V253M524.5,256V259M524.5,262V265M524.5,268V271M524.5,274V277M524.5,280V283M524.5,286V289M524.5,292V295M524.5,298V301M524.5,304V307M524.5,310V313M524.5,316V319M524.5,322V325M524.5,328V331M524.5,334V337M524.5,340V343M524.5,346V349M524.5,352V355M524.5,358V361M524.5,364V367M524.5,370V373M524.5,376V377" stroke="#778899" stroke-width="1" fill="none"/>
<path d="M524.5,382V385M524.5,388V391M524.5,394V397M524.5,400V403M524.5,406V409M524.5,412V415M524.5,418V421M524.5,424V427M524.5,430V433M524.5,436V439M524.5,442V445M524.5,448V451M524.5,454V457M524.5,460V463M524.5,466V469M524.5,472V475M524.5,478V481M524.5,484V487M524.5,490V493M524.5,496V499M524.5,502V505M524.5,508V511M524.5,514V517M524.5,520V523M524.5,526V529M524.5,532V535M524.5,538V541M524.5,544V547M524.5,550V552" stroke="#778899" stroke-width="1" fill="none"/>
<path d="M556.5,35V37M556.5,40V43M556.5,46V49M556.5,52V55M556.5,58V61M556.5,64V67M556.5,70V73M556.5,76V79M556.5,82V85M556.5,88V91M556.5,94V97M556.5,100V103M556.5,106V109M556.5,112V115M556.5,118V121M556.5,124V127M556.5,130V133M556.5,136V139M556.5,142V145M556.5,148V151M556.5,154V157M556.5,160V163M556.5,166V169M556.5,172V175M556.5,178V181M556.5,184V187M556.5,190V193M556.5,196V199M556.5,202V205M556.5,208V211M556.5,214V217M556.5,220V223M556.5,226V229M556.5,232V235M556.5,238V241M556.5,244V247M556.5,250V253M556.5,256V259M556.5,262V265M556.5,268V271M556.5,274V277M556.5,280V283M556.5,286V289M556.5,292V295M556.5,298V301M556.5,304V307M556.5,310V313M556.5,316V319M556.5,322V325M556.5,328V331M556.5,334V337M556.5,340V343M556.5,346V349M556.5,352V355M556.5,358V361M556.5,364V367M556.5,370V373M556.5,376V377" stroke="#778899" stroke-width="1" fill="none"/>
<path d="M556.5,382V385M556.5,388V391M556.5,394V397M556.5,400V403M556.5,406V409M556.5,412V415M556.5,418V421M556.5,424V427M556.5,430V433M556.5,436V439M556.5,442V445M556.5,448V451M556.5,454V457M556.5,460V463M556.5,466V469M556.5,472V475M556.5,478V481M556.5,484V487M556.5,490V493M556.5,496V499M556.5,502V505M556.5,508V511M556.5,514V517M556.5,520V523M556.5,526V529M556.5,532V535M556.5,538V541M556.5,544V547M556.5,550V552" stroke="#778899" stroke-width="1" fill="none"/>
<path d="M588.5,35V37M588.5,40V43M588.5,46V49M588.5,52V55M588.5,58V61M588.5,64V67M588.5,70V73M588.5,76V79M588.5,82V85M588.5,88V91M588.5,94V97M588.5,100V103M588.5,106V109M588.5,112V115M588.5,118V121M588.5,124V127M588.5,130V133M588.5,136V139M588.5,142V145M588.5,148V151M588.5,154V157M588.5,160V163M588.5,166V169M588.5,172V175M588.5,178V181M588.5,184V187M588.5,190V193M588.5,196V199M588.5,202V205M588.5,208V211M588.5,214V217M588.5,220V223M588.5,226V229M588.5,232V235M588.5,238V241M588.5,244V247M588.5,250V253M588.5,256V259M588.5,262V265M588.5,268V271M588.5,274V277M588.5,280V283M588.5,286V289M588.5,292V295M588.5,298V301M588.5,304V307M588.5,310V313M588.5,316V319M588.5,322V325M588.5,328V331M588.5,334V337M588.5,340V343M588.5,346V349M588.5,352V355M588.5,358V361M588.5,364V367M588.5,370V373M588.5,376V377" stroke="#778899" stroke-width="1" fill="none"/>
<path d="M588.5,382V385M588.5,388V391M588.5,394V397M588.5,400V403M588.5,406V409M588.5,412V415M588.5,418V421M588.5,424V427M588.5,430V433M588.5,436V439M588.5,442V445M588.5,448V451M588.5,454V457M588.5,460V463M588.5,466V469M588.5,472V475M588.5,478V481M588.5,484V487M588.5,490V493M588.5,496V499M588.5,502V505M588.5,508V511M588.5,514V517M588.5,520V523M588.5,526V529M588.5,532V535M588.5,538V541M588.5,544V547M588.5,550V552" stroke="#778899" stroke-width="1" fill="none"/>
<path d="M620.5,35V37M620.5,40V43M620.5,46V49M620.5,52V55M620.5,58V61M620.5,64V67M620.5,70V73M620.5,76V79M620.5,82V85M620.5,88V91M620.5,94V97M620.5,100V103M620.5,106V109M620.5,112V115M620.5,118V121M620.5,124V127M620.5,130V133M620.5,136V139M620.5,142V145M620.5,148V151M620.5,154V157M620.5,160V163M620.5,166V169M620.5,172V175M620.5,178V181M620.5,184V187M620.5,190V193M620.5,196V199M620.5,202V205M620.5,208V211M620.5,214V217M620.5,220V223M620.5,226V229M620.5,232V235M620.5,238V241M620.5,244V247M620.5,250V253M620.5,256V259M620.5,262V265M620.5,268V271M620.5,274V277M620.5,280V283M620.5,286V289M620.5,292V295M620.5,298V301M620.5,304V307M620.5,310V313M620.5,316V319M620.5,322V325M620.5,328V331M620.5,334V337M620.5,340V343M620.5,346V349M620.5,352V355M620.5,358V361M620.5,364V367M620.5,370V373M620.5,376V377" stroke="#778899" stroke-width="1" fill="none"/>
<path d="M620.5,382V385M620.5,388V391M620.5,394V397M620.5,400V403M620.5,406V409M620.5,412V415M620.5,418V421M620.5,424V427M620.5,430V433M620.5,436V439M620.5,442V445M620.5,448V451M620.5,454V457M620.5,460V463M620.5,466V469M620.5,472V475M620.5,478V481M620.5,484V487M620.5,490V493M620.5,496V499M620.5,502V505M620.5,508V511M620.5,514V517M620.5,520V523M620.5,526V529M620.5,532V535M620.5,538V541M620.5,544V547M620.5,550V552" stroke="#778899" stroke-width="1" fill="none"/>
<path d="M652.5,35V37M652.5,40V43M652.5,46V49M652.5,52V55M652.5,58V61M652.5,64V67M652.5,70V73M652.5,76V79M652.5,82V85M652.5,88V91M652.5,94V97M652.5,100V103M652.5,106V109M652.5,112V115M652.5,118V121M652.5,124V127M652.5,130V133M652.5,136V139M652.5,142V145M652.5,148V151M652.5,154V157M652.5,160V163M652.5,166V169M652.5,172V175M652.5,178V181M652.5,184V187M652.5,190V193M652.5,196V199M652.5,202V205M652.5,208V211M652.5,214V217M652.5,220V223M652.5,226V229M652.5,232V235M652.5,238V241M652.5,244V247M652.5,250V253M652.5,256V259M652.5,262V265M652.5,268V271M652.5,274V277M652.5,280V283M652.5,286V289M652.5,292V295M652.5,298V301M652.5,304V307M652.5,310V313M652.5,316V319M652.5,322V325M652.5,328V331M652.5,334V337M652.5,340V343M652.5,346V349M652.5,352V355M652.5,358V361M652.5,364V367M652.5,370V373M652.5,376V377" stroke="#778899" stroke-width="1" fill="none"/>
<path d="M652.5,382V385M652.5,388V391M652.5,394V397M652.5,400V403M652.5,406V409M652.5,412V415M652.5,418V421M652.5,424V427M652.5,430V433M652.5,436V439M652.5,442V445M652.5,448V451M652.5,454V457M652.5,460V463M652.5,466V469M652.5,472V475M652.5,478V481M652.5,484V487M652.5,490V493M652.5,496V499M652.5,502V505M652.5,508V511M652.5,514V517M652.5,520V523M652.5,526V529M652.5,532V535M652.5,538V541M652.5,544V547M652.5,550V552" stroke="#778899" stroke-width="1" fill="none"/>
<path d="M132.5,35V37M132.5,40V43M132.5,46V49M132.5,52V55M132.5,58V61M132.5,64V67M132.5,70V73M132.5,76V79M132.5,82V85M132.5,88V91M132.5,94V97M132.5,100V103M132.5,106V109M132.5,112V115M132.5,118V121M132.5,124V127M132.5,130V133M132.5,136V139M132.5,142V145M132.5,148V151M132.5,154V157M132.5,160V163M132.5,166V169M132.5,172V175M132.5,178V181M132.5,184V187M132.5,190V193M132.5,196V199M132.5,202V205M132.5,208V211M132.5,214V217M132.5,220V223M132.5,226V229M132.5,232V235M132.5,238V241M132.5,244V247M132.5,250V253M132.5,256V259M132.5,262V265M132.5,268V271M132.5,274V277M132.5,280V283M132.5,286V289M132.5,292V295M132.5,298V301M132.5,304V307M132.5,310V313M132.5,316V319M132.5,322V325M132.5,328V331M132.5,334V337M132.5,340V343M132.5,346V349M132.5,352V355M132.5,358V361M132.5,364V367M132.5,370V373M132.5,376V377" stroke="#ffffff" stroke-width="1" fill="none"/>
<path d="M132.5,382V385M132.5,388V391M132.5,394V397M132.5,400V403M132.5,406V409M132.5,412V415M132.5,418V421M132.5,424V427M132.5,430V433M132.5,436V439M132.5,442V445M132.5,448V451M132.5,454V457M132.5,460V463M132.5,466V469M132.5,472V475M132.5,478V481M132.5,484V487M132.5,490V493M132.5,496V499M132.5,502V505M132.5,508V511M132.5,514V517M132.5,520V523M132.5,526V529M132.5,532V535M132.5,538V541M132.5,544V547M132.5,550V552" stroke="#ffffff" stroke-width="1" fill="none"/>
<path d="M324.5,35V37M324.5,40V43M324.5,46V49M324.5,52V55M324.5,58V61M324.5,64V67M324.5,70V73M324.5,76V79M324.5,82V85M324.5,88V91M324.5,94V97M324.5,100V103M324.5,106V109M324.5,112V115M324.5,118V121M324.5,124V127M324.5,130V133M324.5,136V139M324.5,142V145M324.5,148V151M324.5,154V157M324.5,160V163M324.5,166V169M324.5,172V175M324.5,178V181M324.5,184V187M324.5,190V193M324.5,196V199M324.5,202V205M324.5,208V211M324.5,214V217M324.5,220V223M324.5,226V229M324.5,232V235M324.5,238V241M324.5,244V247M324.5,250V253M324.5,256V259M324.5,262V265M324.5,268V271M324.5,274V277M324.5,280V283M324.5,286V289M324.5,292V295M324.5,298V301M324.5,304V307M324.5,310V313M324.5,316V319M324.5,322V325M324.5,328V331M324.5,334V337M324.5,340V343M324.5,346V349M324.5,352V355M324.5,358V361M324.5,364V367M324.5,370V373M324.5,376V377" stroke="#ffffff" stroke-width="1" fill="none"/>
<path d="M324.5,382V385M324.5,388V391M324.5,394V397M324.5,400V403M324.5,406V409M324.5,412V415M324.5,418V421M324.5,424V427M324.5,430V433M324.5,436V439M324.5,442V445M324.5,448V451M324.5,454V457M324.5,460V463M324.5,466V469M324.5,472V475M324.5,478V481M324.5,484V487M324.5,490V493M324.5,496V499M324.5,502V505M324.5,508V511M324.5,514V517M324.5,520V523M324.5,526V529M324.5,532V535M324.5,538V541M324.5,544V547M324.5,550V552" stroke="#ffffff" stroke-width="1" fill="none"/>
<path d="M516.5,35V37M516.5,40V43M516.5,46V49M516.5,52V55M516.5,58V61M516.5,64V67M516.5,70V73M516.5,76V79M516.5,82V85M516.5,88V91M516.5,94V97M516.5,100V103M516.5,106V109M516.5,112V115M516.5,118V121M516.5,124V127M516.5,130V133M516.5,136V139M516.5,142V145M516.5,148V151M516.5,154V157M516.5,160V163M516.5,166V169M516.5,172V175M516.5,178V181M516.5,184V187M516.5,190V193M516.5,196V199M516.5,202V205M516.5,208V211M516.5,214V217M516.5,220V223M516.5,226V229M516.5,232V235M516.5,238V241M516.5,244V247M516.5,250V253M516.5,256V259M516.5,262V265M516.5,268V271M516.5,274V277M516.5,280V283M516.5,286V289M516.5,292V295M516.5,298V301M516.5,304V307M516.5,310V313M516.5,316V319M516.5,322V325M516.5,328V331M516.5,334V337M516.5,340V343M516.5,346V349M516.5,352V355M516.5,358V361M516.5,364V367M516.5,370V373M516.5,376V377" stroke="#ffffff" stroke-width="1" fill="none"/>
<path d="M516.5,382V385M516.5,388V391M516.5,394V397M516.5,400V403M516.5,406V409M516.5,412V415M516.5,418V421M516.5,424V427M516.5,430V433M516.5,436V439M516.5,442V445M516.5,448V451M516.5,454V457M516.5,460V463M516.5,466V469M516.5,472V475M516.5,478V481M516.5,484V487M516.5,490V493M516.5,496V499M516.5,502V505M516.5,508V511M516.5,514V517M516.5,520V523M516.5,526V529M516.5,532V535M516.5,538V541M516.5,544V547M516.5,550V552" stroke="#ffffff" stroke-width="1" fill="none"/>
<rect x="12" y="234" width="667" height="1" fill="#778899"/>
</g>
<g shape-rendering="crispEdges">
<rect x="12" y="53" width="1" height="62" fill="#00ff00"/>
<rect x="10" y="57" width="5" height="56" fill="#00ff00"/>
<rect x="11" y="58" width="3" height="54" fill="#ffffff"/>
<rect x="20" y="86" width="1" height="40" fill="#00ff00"/>
<rect x="18" y="99" width="5" height="13" fill="#00ff00"/>
<rect x="19" y="100" width="3" height="11" fill="#000000"/>
<rect x="28" y="87" width="1" height="37" fill="#00ff00"/>
<rect x="26" y="99" width="5" height="10" fill="#00ff00"/>
<rect x="27" y="100" width="3" height="8" fill="#ffffff"/>
<rect x="36" y="65" width="1" height="56" fill="#00ff00"/>
<rect x="34" y="88" width="5" height="21" fill="#00ff00"/>
<rect x="35" y="89" width="3" height="19" fill="#000000"/>
<rect x="44" y="76" width="1" height="40" fill="#00ff00"/>
<rect x="42" y="89" width="5" height="22" fill="#00ff00"/>
<rect x="43" y="90" width="3" height="20" fill="#ffffff"/>
<rect x="52" y="92" width="1" height="41" fill="#00ff00"/>
<rect x="50" y="93" width="5" height="19" fill="#00ff00"/>
<rect x="51" y="94" width="3" height="17" fill="#000000"/>
<rect x="60" y="92" width="1" height="54" fill="#00ff00"/>
<rect x="58" y="93" width="5" height="14" fill="#00ff00"/>
<rect x="59" y="94" width="3" height="12" fill="#ffffff"/>
<rect x="68" y="103" width="1" height="65" fill="#00ff00"/>
<rect x="66" y="105" width="5" height="63" fill="#00ff00"/>
<rect x="67" y="106" width="3" height="61" fill="#ffffff"/>
<rect x="76" y="110" width="1" height="71" fill="#00ff00"/>
<rect x="74" y="112" width="5" height="57" fill="#00ff00"/>
<rect x="75" y="113" width="3" height="55" fill="#000000"/>
<rect x="84" y="111" width="1" height="48" fill="#00ff00"/>
<rect x="82" y="111" width="5" height="45" fill="#00ff00"/>
<rect x="83" y="112" width="3" height="43" fill="#ffffff"/>
<rect x="92" y="139" width="1" height="18" fill="#00ff00"/>
<rect x="90" y="145" width="5" height="12" fill="#00ff00"/>
<rect x="91" y="146" width="3" height="10" fill="#000000"/>
<rect x="100" y="131" width="1" height="22" fill="#00ff00"/>
<rect x="98" y="138" width="5" height="8" fill="#00ff00"/>
<rect x="99" y="139" width="3" height="6" fill="#000000"/>
<rect x="108" y="133" width="1" height="18" fill="#00ff00"/>
<rect x="106" y="138" width="5" height="10" fill="#00ff00"/>
<rect x="107" y="139" width="3" height="8" fill="#ffffff"/>
<rect x="116" y="146" width="1" height="15" fill="#00ff00"/>
<rect x="114" y="147" width="5" height="2" fill="#00ff00"/>
<rect x="124" y="145" width="1" height="27" fill="#00ff00"/>
<rect x="122" y="148" width="5" height="20" fill="#00ff00"/>
<rect x="123" y="149" width="3" height="18" fill="#ffffff"/>
<rect x="132" y="150" width="1" height="30" fill="#00ff00"/>
<rect x="130" y="159" width="5" height="9" fill="#00ff00"/>
<rect x="131" y="160" width="3" height="7" fill="#000000"/>
<rect x="140" y="154" width="1" height="15" fill="#00ff00"/>
<rect x="138" y="159" width="5" height="1" fill="#00ff00"/>
<rect x="148" y="160" width="1" height="60" fill="#00ff00"/>
<rect x="146" y="160" width="5" height="48" fill="#00ff00"/>
<rect x="147" y="161" width="3" height="46" fill="#ffffff"/>
<rect x="156" y="200" width="1" height="24" fill="#00ff00"/>
<rect x="154" y="207" width="5" height="4" fill="#00ff00"/>
<rect x="155" y="208" width="3" height="2" fill="#ffffff"/>
<rect x="164" y="192" width="1" height="22" fill="#00ff00"/>
<rect x="162" y="197" width="5" height="15" fill="#00ff00"/>
<rect x="163" y="198" width="3" height="13" fill="#000000"/>
<rect x="172" y="182" width="1" height="18" fill="#00ff00"/>
<rect x="170" y="188" width="5" height="10" fill="#00ff00"/>
<rect x="171" y="189" width="3" height="8" fill="#000000"/>
<rect x="180" y="167" width="1" height="30" fill="#00ff00"/>
<rect x="178" y="178" width="5" height="10" fill="#00ff00"/>
<rect x="179" y="179" width="3" height="8" fill="#000000"/>
<rect x="188" y="163" width="1" height="33" fill="#00ff00"/>
<rect x="186" y="177" width="5" height="13" fill="#00ff00"/>
<rect x="187" y="178" width="3" height="11" fill="#ffffff"/>
<rect x="196" y="184" width="1" height="17" fill="#00ff00"/>
<rect x="194" y="190" width="5" height="3" fill="#00ff00"/>
<rect x="195" y="191" width="3" height="1" fill="#ffffff"/>
<rect x="204" y="187" width="1" height="25" fill="#00ff00"/>
<rect x="202" y="192" width="5" height="10" fill="#00ff00"/>
<rect x="203" y="193" width="3" height="8" fill="#ffffff"/>
<rect x="212" y="160" width="1" height="62" fill="#00ff00"/>
<rect x="210" y="189" width="5" height="14" fill="#00ff00"/>
<rect x="211" y="190" width="3" height="12" fill="#000000"/>
<rect x="220" y="171" width="1" height="34" fill="#00ff00"/>
<rect x="218" y="188" width="5" height="8" fill="#00ff00"/>
<rect x="219" y="189" width="3" height="6" fill="#ffffff"/>
<rect x="228" y="195" width="1" height="41" fill="#00ff00"/>
<rect x="226" y="195" width="5" height="33" fill="#00ff00"/>
<rect x="227" y="196" width="3" height="31" fill="#ffffff"/>
<rect x="236" y="200" width="1" height="49" fill="#00ff00"/>
<rect x="234" y="224" width="5" height="4" fill="#00ff00"/>
<rect x="235" y="225" width="3" height="2" fill="#000000"/>
<rect x="244" y="183" width="1" height="62" fill="#00ff00"/>
<rect x="242" y="224" width="5" height="11" fill="#00ff00"/>
<rect x="243" y="225" width="3" height="9" fill="#ffffff"/>
<rect x="252" y="230" width="1" height="33" fill="#00ff00"/>
<rect x="250" y="234" width="5" height="9" fill="#00ff00"/>
<rect x="251" y="235" width="3" height="7" fill="#ffffff"/>
<rect x="260" y="235" width="1" height="30" fill="#00ff00"/>
<rect x="258" y="241" width="5" height="16" fill="#00ff00"/>
<rect x="259" y="242" width="3" height="14" fill="#ffffff"/>
<rect x="268" y="242" width="1" height="76" fill="#00ff00"/>
<rect x="266" y="256" width="5" height="39" fill="#00ff00"/>
<rect x="267" y="257" width="3" height="37" fill="#ffffff"/>
<rect x="276" y="285" width="1" height="35" fill="#00ff00"/>
<rect x="274" y="294" width="5" height="1" fill="#00ff00"/>
<rect x="284" y="257" width="1" height="43" fill="#00ff00"/>
<rect x="282" y="257" width="5" height="38" fill="#00ff00"/>
<rect x="283" y="258" width="3" height="36" fill="#000000"/>
<rect x="292" y="253" width="1" height="33" fill="#00ff00"/>
<rect x="290" y="258" width="5" height="26" fill="#00ff00"/>
<rect x="291" y="259" width="3" height="24" fill="#ffffff"/>
<rect x="300" y="266" width="1" height="25" fill="#00ff00"/>
<rect x="298" y="274" width="5" height="10" fill="#00ff00"/>
<rect x="299" y="275" width="3" height="8" fill="#000000"/>
<rect x="308" y="261" width="1" height="36" fill="#00ff00"/>
<rect x="306" y="274" width="5" height="23" fill="#00ff00"/>
<rect x="307" y="275" width="3" height="21" fill="#ffffff"/>
<rect x="316" y="289" width="1" height="30" fill="#00ff00"/>
<rect x="314" y="296" width="5" height="21" fill="#00ff00"/>
<rect x="315" y="297" width="3" height="19" fill="#ffffff"/>
<rect x="324" y="304" width="1" height="27" fill="#00ff00"/>
<rect x="322" y="311" width="5" height="20" fill="#00ff00"/>
<rect x="323" y="312" width="3" height="18" fill="#000000"/>
<rect x="332" y="289" width="1" height="30" fill="#00ff00"/>
<rect x="330" y="304" width="5" height="9" fill="#00ff00"/>
<rect x="331" y="305" width="3" height="7" fill="#000000"/>
<rect x="340" y="296" width="1" height="52" fill="#00ff00"/>
<rect x="338" y="304" width="5" height="38" fill="#00ff00"/>
<rect x="339" y="305" width="3" height="36" fill="#ffffff"/>
<rect x="348" y="320" width="1" height="37" fill="#00ff00"/>
<rect x="346" y="324" width="5" height="18" fill="#00ff00"/>
<rect x="347" y="325" width="3" height="16" fill="#000000"/>
<rect x="356" y="317" width="1" height="26" fill="#00ff00"/>
<rect x="354" y="324" width="5" height="18" fill="#00ff00"/>
<rect x="355" y="325" width="3" height="16" fill="#ffffff"/>
<rect x="364" y="334" width="1" height="33" fill="#00ff00"/>
<rect x="362" y="340" width="5" height="21" fill="#00ff00"/>
<rect x="363" y="341" width="3" height="19" fill="#ffffff"/>
<rect x="372" y="334" width="1" height="33" fill="#00ff00"/>
<rect x="370" y="340" width="5" height="21" fill="#00ff00"/>
<rect x="371" y="341" width="3" height="19" fill="#000000"/>
<rect x="380" y="328" width="1" height="16" fill="#00ff00"/>
<rect x="378" y="329" width="5" height="11" fill="#00ff00"/>
<rect x="379" y="330" width="3" height="9" fill="#000000"/>
<rect x="388" y="292" width="1" height="42" fill="#00ff00"/>
<rect x="386" y="296" width="5" height="34" fill="#00ff00"/>
<rect x="387" y="297" width="3" height="32" fill="#000000"/>
<rect x="396" y="271" width="1" height="60" fill="#00ff00"/>
<rect x="394" y="296" width="5" height="32" fill="#00ff00"/>
<rect x="395" y="297" width="3" height="30" fill="#ffffff"/>
<rect x="404" y="301" width="1" height="61" fill="#00ff00"/>
<rect x="402" y="327" width="5" height="19" fill="#00ff00"/>
<rect x="403" y="328" width="3" height="17" fill="#ffffff"/>
<rect x="412" y="284" width="1" height="71" fill="#00ff00"/>
<rect x="410" y="296" width="5" height="49" fill="#00ff00"/>
<rect x="411" y="297" width="3" height="47" fill="#000000"/>
<rect x="420" y="266" width="1" height="46" fill="#00ff00"/>
<rect x="418" y="282" width="5" height="16" fill="#00ff00"/>
<rect x="419" y="283" width="3" height="14" fill="#000000"/>
<rect x="428" y="270" width="1" height="36" fill="#00ff00"/>
<rect x="426" y="282" width="5" height="1" fill="#00ff00"/>
<rect x="436" y="275" width="1" height="39" fill="#00ff00"/>
<rect x="434" y="282" width="5" height="9" fill="#00ff00"/>
<rect x="435" y="283" width="3" height="7" fill="#ffffff"/>
<rect x="444" y="283" width="1" height="29" fill="#00ff00"/>
<rect x="442" y="290" width="5" height="18" fill="#00ff00"/>
<rect x="443" y="291" width="3" height="16" fill="#ffffff"/>
<rect x="452" y="299" width="1" height="42" fill="#00ff00"/>
<rect x="450" y="307" width="5" height="9" fill="#00ff00"/>
<rect x="451" y="308" width="3" height="7" fill="#ffffff"/>
<rect x="460" y="309" width="1" height="31" fill="#00ff00"/>
<rect x="458" y="316" width="5" height="6" fill="#00ff00"/>
<rect x="459" y="317" width="3" height="4" fill="#ffffff"/>
<rect x="468" y="314" width="1" height="15" fill="#00ff00"/>
<rect x="466" y="321" width="5" height="7" fill="#00ff00"/>
<rect x="467" y="322" width="3" height="5" fill="#ffffff"/>
<rect x="476" y="316" width="1" height="14" fill="#00ff00"/>
<rect x="474" y="324" width="5" height="3" fill="#00ff00"/>
<rect x="475" y="325" width="3" height="1" fill="#000000"/>
<rect x="484" y="307" width="1" height="19" fill="#00ff00"/>
<rect x="482" y="308" width="5" height="17" fill="#00ff00"/>
<rect x="483" y="309" width="3" height="15" fill="#000000"/>
<rect x="492" y="249" width="1" height="62" fill="#00ff00"/>
<rect x="490" y="252" width="5" height="57" fill="#00ff00"/>
<rect x="491" y="253" width="3" height="55" fill="#000000"/>
<rect x="500" y="235" width="1" height="25" fill="#00ff00"/>
<rect x="498" y="250" width="5" height="2" fill="#00ff00"/>
<rect x="508" y="244" width="1" height="37" fill="#00ff00"/>
<rect x="506" y="250" width="5" height="31" fill="#00ff00"/>
<rect x="507" y="251" width="3" height="29" fill="#ffffff"/>
<rect x="516" y="263" width="1" height="31" fill="#00ff00"/>
<rect x="514" y="268" width="5" height="13" fill="#00ff00"/>
<rect x="515" y="269" width="3" height="11" fill="#000000"/>
<rect x="524" y="251" width="1" height="27" fill="#00ff00"/>
<rect x="522" y="269" width="5" height="6" fill="#00ff00"/>
<rect x="523" y="270" width="3" height="4" fill="#ffffff"/>
<rect x="532" y="225" width="1" height="52" fill="#00ff00"/>
<rect x="530" y="236" width="5" height="39" fill="#00ff00"/>
<rect x="531" y="237" width="3" height="37" fill="#000000"/>
<rect x="540" y="233" width="1" height="13" fill="#00ff00"/>
<rect x="538" y="234" width="5" height="4" fill="#00ff00"/>
<rect x="539" y="235" width="3" height="2" fill="#000000"/>
</g>
<rect x="9" y="35" width="2" height="342" fill="#000"/>
<g clip-path="url(#indclip)">
<clipPath id="indclip"><rect x="12" y="380" width="667" height="172"/></clipPath>
<polyline points="12,533.7 20,535.0 28,533.5 36,527.0 44,527.0 52,514.0 60,502.0 68,502.0 76,502.0 84,527.0 92,528.0 100,528.0 108,519.5 116,510.0 124,505.5 132,495.0 140,532.8 148,532.8 156,544.5 164,544.5 172,536.7 180,521.5 188,506.0 196,491.0 204,477.0 212,442.0 220,464.0 228,503.0 236,538.5 244,539.5 252,539.7 260,544.0 268,546.6 276,548.8 284,546.2 292,538.0 300,530.3 308,530.0 316,530.0 324,529.8 332,525.7 340,536.0 348,543.0 356,541.5 364,541.5 372,532.5 380,518.5 388,476.8 396,461.8 404,462.6 412,453.8 420,423.0 428,414.7 436,418.1 444,434.5 452,460.6 460,460.6 468,500.5 476,540.9 484,537.0 492,489.0 500,457.5 508,434.0 516,419.2 524,421.0 532,418.0 540,416.8" fill="none" stroke="#ff0000" stroke-width="2" stroke-linejoin="miter" shape-rendering="crispEdges"/>
<polyline points="12,461.5 20,466.8 28,477.8 36,487.0 44,496.0 52,493.0 60,490.2 68,490.2 76,493.0 84,508.5 92,518.0 100,527.0 108,534.5 116,540.0 124,543.3 132,545.5 140,545.8 148,545.8 156,545.8 164,545.8 172,545.8 180,545.3 188,545.0 196,544.5 204,543.8 212,542.0 220,541.5 228,541.5 236,541.9 244,543.3 252,543.3 260,543.5 268,544.5 276,545.3 284,544.5 292,544.4 300,543.7 308,543.7 316,543.7 324,543.7 332,543.7 340,543.7 348,544.4 356,547.4 364,548.3 372,548.3 380,548.3 388,546.5 396,545.3 404,544.5 412,541.5 420,533.5 428,523.7 436,514.2 444,509.3 452,504.1 460,499.6 468,494.0 476,494.0 484,488.7 492,474.0 500,459.0 508,442.5 516,432.0 524,426.2 532,419.7 540,413.0" fill="none" stroke="#00ffff" stroke-width="2" stroke-linejoin="miter" shape-rendering="crispEdges"/>
<polyline points="12,470.0 20,473.3 28,478.0 36,478.0 44,476.8 52,472.5 60,471.6 68,470.8 76,470.8 84,473.8 92,479.0 100,485.5 108,493.0 116,500.0 124,505.5 132,511.5 140,515.0 148,519.0 156,523.5 164,525.0 172,525.6 180,528.2 188,530.4 196,531.8 204,533.1 212,534.6 220,536.0 228,537.3 236,538.5 244,541.9 252,542.7 260,543.2 268,543.2 276,543.2 284,543.4 292,544.7 300,546.6 308,547.6 316,549.0 324,549.2 332,550.0 340,550.0 348,550.0 356,550.0 364,550.0 372,550.0 380,550.0 388,549.8 396,548.8 404,548.6 412,548.2 420,547.8 428,547.1 436,546.5 444,545.4 452,544.3 460,543.7 468,543.5 476,543.0 484,542.7 492,539.0 500,535.7 508,533.0 516,530.5 524,526.6 532,523.4 540,518.7" fill="none" stroke="#ffff00" stroke-width="2" stroke-linejoin="miter" shape-rendering="crispEdges"/>
</g>
<g shape-rendering="crispEdges" fill="#ffffff">
<rect x="11" y="34" width="669" height="1"/><rect x="11" y="377" width="669" height="1"/>
<rect x="11" y="34" width="1" height="344"/><rect x="679" y="34" width="1" height="344"/>
<rect x="11" y="379" width="669" height="1"/><rect x="11" y="552" width="669" height="1"/>
<rect x="11" y="379" width="1" height="174"/><rect x="679" y="379" width="1" height="174"/>
<rect x="44" y="376" width="1" height="1" fill="#778899"/><rect x="44" y="377" width="1" height="1" fill="#d4dce6"/><rect x="44" y="378" width="1" height="1" fill="#778899"/><rect x="44" y="379" width="1" height="1" fill="#e4eaf0"/>
<rect x="76" y="376" width="1" height="1" fill="#778899"/><rect x="76" y="377" width="1" height="1" fill="#d4dce6"/><rect x="76" y="378" width="1" height="1" fill="#778899"/><rect x="76" y="379" width="1" height="1" fill="#e4eaf0"/>
<rect x="108" y="376" width="1" height="1" fill="#778899"/><rect x="108" y="377" width="1" height="1" fill="#d4dce6"/><rect x="108" y="378" width="1" height="1" fill="#778899"/><rect x="108" y="379" width="1" height="1" fill="#e4eaf0"/>
<rect x="140" y="376" width="1" height="1" fill="#778899"/><rect x="140" y="377" width="1" height="1" fill="#d4dce6"/><rect x="140" y="378" width="1" height="1" fill="#778899"/><rect x="140" y="379" width="1" height="1" fill="#e4eaf0"/>
<rect x="172" y="376" width="1" height="1" fill="#778899"/><rect x="172" y="377" width="1" height="1" fill="#d4dce6"/><rect x="172" y="378" width="1" height="1" fill="#778899"/><rect x="172" y="379" width="1" height="1" fill="#e4eaf0"/>
<rect x="204" y="376" width="1" height="1" fill="#778899"/><rect x="204" y="377" width="1" height="1" fill="#d4dce6"/><rect x="204" y="378" width="1" height="1" fill="#778899"/><rect x="204" y="379" width="1" height="1" fill="#e4eaf0"/>
<rect x="236" y="376" width="1" height="1" fill="#778899"/><rect x="236" y="377" width="1" height="1" fill="#d4dce6"/><rect x="236" y="378" width="1" height="1" fill="#778899"/><rect x="236" y="379" width="1" height="1" fill="#e4eaf0"/>
<rect x="268" y="376" width="1" height="1" fill="#778899"/><rect x="268" y="377" width="1" height="1" fill="#d4dce6"/><rect x="268" y="378" width="1" height="1" fill="#778899"/><rect x="268" y="379" width="1" height="1" fill="#e4eaf0"/>
<rect x="300" y="376" width="1" height="1" fill="#778899"/><rect x="300" y="377" width="1" height="1" fill="#d4dce6"/><rect x="300" y="378" width="1" height="1" fill="#778899"/><rect x="300" y="379" width="1" height="1" fill="#e4eaf0"/>
<rect x="332" y="376" width="1" height="1" fill="#778899"/><rect x="332" y="377" width="1" height="1" fill="#d4dce6"/><rect x="332" y="378" width="1" height="1" fill="#778899"/><rect x="332" y="379" width="1" height="1" fill="#e4eaf0"/>
<rect x="364" y="376" width="1" height="1" fill="#778899"/><rect x="364" y="377" width="1" height="1" fill="#d4dce6"/><rect x="364" y="378" width="1" height="1" fill="#778899"/><rect x="364" y="379" width="1" height="1" fill="#e4eaf0"/>
<rect x="396" y="376" width="1" height="1" fill="#778899"/><rect x="396" y="377" width="1" height="1" fill="#d4dce6"/><rect x="396" y="378" width="1" height="1" fill="#778899"/><rect x="396" y="379" width="1" height="1" fill="#e4eaf0"/>
<rect x="428" y="376" width="1" height="1" fill="#778899"/><rect x="428" y="377" width="1" height="1" fill="#d4dce6"/><rect x="428" y="378" width="1" height="1" fill="#778899"/><rect x="428" y="379" width="1" height="1" fill="#e4eaf0"/>
<rect x="460" y="376" width="1" height="1" fill="#778899"/><rect x="460" y="377" width="1" height="1" fill="#d4dce6"/><rect x="460" y="378" width="1" height="1" fill="#778899"/><rect x="460" y="379" width="1" height="1" fill="#e4eaf0"/>
<rect x="492" y="376" width="1" height="1" fill="#778899"/><rect x="492" y="377" width="1" height="1" fill="#d4dce6"/><rect x="492" y="378" width="1" height="1" fill="#778899"/><rect x="492" y="379" width="1" height="1" fill="#e4eaf0"/>
<rect x="524" y="376" width="1" height="1" fill="#778899"/><rect x="524" y="377" width="1" height="1" fill="#d4dce6"/><rect x="524" y="378" width="1" height="1" fill="#778899"/><rect x="524" y="379" width="1" height="1" fill="#e4eaf0"/>
<rect x="556" y="376" width="1" height="1" fill="#778899"/><rect x="556" y="377" width="1" height="1" fill="#d4dce6"/><rect x="556" y="378" width="1" height="1" fill="#778899"/><rect x="556" y="379" width="1" height="1" fill="#e4eaf0"/>
<rect x="588" y="376" width="1" height="1" fill="#778899"/><rect x="588" y="377" width="1" height="1" fill="#d4dce6"/><rect x="588" y="378" width="1" height="1" fill="#778899"/><rect x="588" y="379" width="1" height="1" fill="#e4eaf0"/>
<rect x="620" y="376" width="1" height="1" fill="#778899"/><rect x="620" y="377" width="1" height="1" fill="#d4dce6"/><rect x="620" y="378" width="1" height="1" fill="#778899"/><rect x="620" y="379" width="1" height="1" fill="#e4eaf0"/>
<rect x="652" y="376" width="1" height="1" fill="#778899"/><rect x="652" y="377" width="1" height="1" fill="#d4dce6"/><rect x="652" y="378" width="1" height="1" fill="#778899"/><rect x="652" y="379" width="1" height="1" fill="#e4eaf0"/>
<rect x="132" y="376" width="1" height="3" fill="#ffffff"/>
<rect x="324" y="376" width="1" height="3" fill="#ffffff"/>
<rect x="516" y="376" width="1" height="3" fill="#ffffff"/>
<rect x="679" y="396" width="1" height="1" fill="#c8c8c8"/>
<rect x="679" y="412" width="1" height="1" fill="#c8c8c8"/>
<rect x="679" y="435" width="1" height="1" fill="#c8c8c8"/>
<rect x="679" y="513" width="1" height="1" fill="#c8c8c8"/>
<rect x="679" y="536" width="1" height="1" fill="#c8c8c8"/>
<rect x="679" y="41" width="1" height="1" fill="#c0cad4"/>
<rect x="679" y="74" width="1" height="1" fill="#c0cad4"/>
<rect x="679" y="108" width="1" height="1" fill="#c0cad4"/>
<rect x="679" y="141" width="1" height="1" fill="#c0cad4"/>
<rect x="679" y="174" width="1" height="1" fill="#c0cad4"/>
<rect x="679" y="207" width="1" height="1" fill="#c0cad4"/>
<rect x="679" y="241" width="1" height="1" fill="#c0cad4"/>
<rect x="679" y="274" width="1" height="1" fill="#c0cad4"/>
<rect x="679" y="307" width="1" height="1" fill="#c0cad4"/>
<rect x="679" y="340" width="1" height="1" fill="#c0cad4"/>
<rect x="679" y="374" width="1" height="1" fill="#c0cad4"/>
<rect x="680" y="41" width="2" height="1"/>
<rect x="680" y="74" width="2" height="1"/>
<rect x="680" y="108" width="2" height="1"/>
<rect x="680" y="141" width="2" height="1"/>
<rect x="680" y="174" width="2" height="1"/>
<rect x="680" y="207" width="2" height="1"/>
<rect x="680" y="241" width="2" height="1"/>
<rect x="680" y="274" width="2" height="1"/>
<rect x="680" y="307" width="2" height="1"/>
<rect x="680" y="340" width="2" height="1"/>
<rect x="680" y="374" width="2" height="1"/>
<rect x="680" y="381" width="1" height="1"/>
<rect x="680" y="474" width="1" height="1"/>
<rect x="680" y="551" width="1" height="1"/>
<rect x="12" y="553" width="1" height="3"/>
<rect x="76" y="553" width="1" height="3"/>
<rect x="140" y="553" width="1" height="3"/>
<rect x="204" y="553" width="1" height="3"/>
<rect x="268" y="553" width="1" height="3"/>
<rect x="332" y="553" width="1" height="3"/>
<rect x="396" y="553" width="1" height="3"/>
<rect x="460" y="553" width="1" height="3"/>
<rect x="524" y="553" width="1" height="3"/>
</g>
<polygon points="545.5,35 555.5,35 550.5,40" fill="#778899" shape-rendering="crispEdges"/>
<polygon points="15,41 22,41 18.5,44.8" fill="#ffffff"/>
<polygon points="475.50,331.70 477.38,336.81 482.82,337.02 478.54,340.39 480.03,345.63 475.50,342.60 470.97,345.63 472.46,340.39 468.18,337.02 473.62,336.81" fill="#ff69b4"/>
<polygon points="484,342 493.5,351.5 493.5,359 487,352.5 487,367 481,367 481,352.5 474.5,359 474.5,351.5" fill="#ff69b4"/>
<text x="685" y="45" font-size="9.8" fill="#ffffff" text-rendering="geometricPrecision" textLength="33" lengthAdjust="spacingAndGlyphs" stroke="#ffffff" stroke-width="0.2">124.010</text>
<text x="685" y="78" font-size="9.8" fill="#ffffff" text-rendering="geometricPrecision" textLength="33" lengthAdjust="spacingAndGlyphs" stroke="#ffffff" stroke-width="0.2">123.890</text>
<text x="685" y="112" font-size="9.8" fill="#ffffff" text-rendering="geometricPrecision" textLength="33" lengthAdjust="spacingAndGlyphs" stroke="#ffffff" stroke-width="0.2">123.770</text>
<text x="685" y="145" font-size="9.8" fill="#ffffff" text-rendering="geometricPrecision" textLength="33" lengthAdjust="spacingAndGlyphs" stroke="#ffffff" stroke-width="0.2">123.650</text>
<text x="685" y="178" font-size="9.8" fill="#ffffff" text-rendering="geometricPrecision" textLength="33" lengthAdjust="spacingAndGlyphs" stroke="#ffffff" stroke-width="0.2">123.530</text>
<text x="685" y="211" font-size="9.8" fill="#ffffff" text-rendering="geometricPrecision" textLength="33" lengthAdjust="spacingAndGlyphs" stroke="#ffffff" stroke-width="0.2">123.410</text>
<text x="685" y="278" font-size="9.8" fill="#ffffff" text-rendering="geometricPrecision" textLength="33" lengthAdjust="spacingAndGlyphs" stroke="#ffffff" stroke-width="0.2">123.170</text>
<text x="685" y="311" font-size="9.8" fill="#ffffff" text-rendering="geometricPrecision" textLength="33" lengthAdjust="spacingAndGlyphs" stroke="#ffffff" stroke-width="0.2">123.050</text>
<text x="685" y="344" font-size="9.8" fill="#ffffff" text-rendering="geometricPrecision" textLength="33" lengthAdjust="spacingAndGlyphs" stroke="#ffffff" stroke-width="0.2">122.930</text>
<text x="685" y="378" font-size="9.8" fill="#ffffff" text-rendering="geometricPrecision" textLength="33" lengthAdjust="spacingAndGlyphs" stroke="#ffffff" stroke-width="0.2">122.810</text>
<text x="685" y="245" font-size="9.8" fill="#ffffff" text-rendering="geometricPrecision" textLength="33" lengthAdjust="spacingAndGlyphs" stroke="#ffffff" stroke-width="0.2">123.290</text>
<rect x="681" y="229" width="41" height="11" fill="#ffffff" shape-rendering="crispEdges"/>
<text x="685" y="238" font-size="9.8" fill="#000000" text-rendering="geometricPrecision" textLength="33" lengthAdjust="spacingAndGlyphs" stroke="#000000" stroke-width="0.2">123.313</text>
<text x="683" y="391" font-size="9.8" fill="#ffffff" text-rendering="geometricPrecision" textLength="15" lengthAdjust="spacingAndGlyphs" stroke="#ffffff" stroke-width="0.2">120</text>
<text x="683" y="400" font-size="9.8" fill="#ffffff" text-rendering="geometricPrecision" textLength="15" lengthAdjust="spacingAndGlyphs" stroke="#ffffff" stroke-width="0.2">100</text>
<text x="682" y="416" font-size="9.8" fill="#ffffff" text-rendering="geometricPrecision" textLength="10" lengthAdjust="spacingAndGlyphs" stroke="#ffffff" stroke-width="0.2">80</text>
<text x="682" y="439" font-size="9.8" fill="#ffffff" text-rendering="geometricPrecision" textLength="10" lengthAdjust="spacingAndGlyphs" stroke="#ffffff" stroke-width="0.2">50</text>
<text x="683" y="478" font-size="9.8" fill="#ffffff" text-rendering="geometricPrecision" textLength="19" lengthAdjust="spacingAndGlyphs" stroke="#ffffff" stroke-width="0.2">0.00</text>
<text x="682" y="517" font-size="9.8" fill="#ffffff" text-rendering="geometricPrecision" textLength="13" lengthAdjust="spacingAndGlyphs" stroke="#ffffff" stroke-width="0.2">-50</text>
<text x="682" y="540" font-size="9.8" fill="#ffffff" text-rendering="geometricPrecision" textLength="13" lengthAdjust="spacingAndGlyphs" stroke="#ffffff" stroke-width="0.2">-80</text>
<text x="683" y="549" font-size="9.8" fill="#ffffff" text-rendering="geometricPrecision" textLength="18" lengthAdjust="spacingAndGlyphs" stroke="#ffffff" stroke-width="0.2">-100</text>
<text x="27" y="46" font-size="9.8" fill="#ffffff" text-rendering="geometricPrecision" textLength="50" lengthAdjust="spacingAndGlyphs" stroke="#ffffff" stroke-width="0.2">EURJPY,H1</text>
<text x="85" y="46" font-size="9.8" fill="#ffffff" text-rendering="geometricPrecision" textLength="31" lengthAdjust="spacingAndGlyphs" stroke="#ffffff" stroke-width="0.2">123.304</text>
<text x="120" y="46" font-size="9.8" fill="#ffffff" text-rendering="geometricPrecision" textLength="31" lengthAdjust="spacingAndGlyphs" stroke="#ffffff" stroke-width="0.2">123.317</text>
<text x="156" y="46" font-size="9.8" fill="#ffffff" text-rendering="geometricPrecision" textLength="31" lengthAdjust="spacingAndGlyphs" stroke="#ffffff" stroke-width="0.2">123.275</text>
<text x="192" y="46" font-size="9.8" fill="#ffffff" text-rendering="geometricPrecision" textLength="31" lengthAdjust="spacingAndGlyphs" stroke="#ffffff" stroke-width="0.2">123.313</text>
<text x="16" y="392" font-size="9.8" fill="#ffffff" text-rendering="geometricPrecision" textLength="109" lengthAdjust="spacingAndGlyphs" stroke="#ffffff" stroke-width="0.2">R(9,26,52) 73.3 79.1 -57.3</text>
<text x="12" y="565" font-size="9.8" fill="#ffffff" text-rendering="geometricPrecision" textLength="53" lengthAdjust="spacingAndGlyphs" stroke="#ffffff" stroke-width="0.2">17 Nov 2020</text>
<text x="76" y="565" font-size="9.8" fill="#ffffff" text-rendering="geometricPrecision" textLength="56" lengthAdjust="spacingAndGlyphs" stroke="#ffffff" stroke-width="0.2">17 Nov 17:00</text>
<text x="140" y="565" font-size="9.8" fill="#ffffff" text-rendering="geometricPrecision" textLength="56" lengthAdjust="spacingAndGlyphs" stroke="#ffffff" stroke-width="0.2">18 Nov 01:00</text>
<text x="204" y="565" font-size="9.8" fill="#ffffff" text-rendering="geometricPrecision" textLength="56" lengthAdjust="spacingAndGlyphs" stroke="#ffffff" stroke-width="0.2">18 Nov 09:00</text>
<text x="268" y="565" font-size="9.8" fill="#ffffff" text-rendering="geometricPrecision" textLength="56" lengthAdjust="spacingAndGlyphs" stroke="#ffffff" stroke-width="0.2">18 Nov 17:00</text>
<text x="332" y="565" font-size="9.8" fill="#ffffff" text-rendering="geometricPrecision" textLength="56" lengthAdjust="spacingAndGlyphs" stroke="#ffffff" stroke-width="0.2">19 Nov 01:00</text>
<text x="396" y="565" font-size="9.8" fill="#ffffff" text-rendering="geometricPrecision" textLength="56" lengthAdjust="spacingAndGlyphs" stroke="#ffffff" stroke-width="0.2">19 Nov 09:00</text>
<text x="460" y="565" font-size="9.8" fill="#ffffff" text-rendering="geometricPrecision" textLength="56" lengthAdjust="spacingAndGlyphs" stroke="#ffffff" stroke-width="0.2">19 Nov 17:00</text>
<text x="524" y="565" font-size="9.8" fill="#ffffff" text-rendering="geometricPrecision" textLength="56" lengthAdjust="spacingAndGlyphs" stroke="#ffffff" stroke-width="0.2">20 Nov 01:00</text>
</svg></body></html>
